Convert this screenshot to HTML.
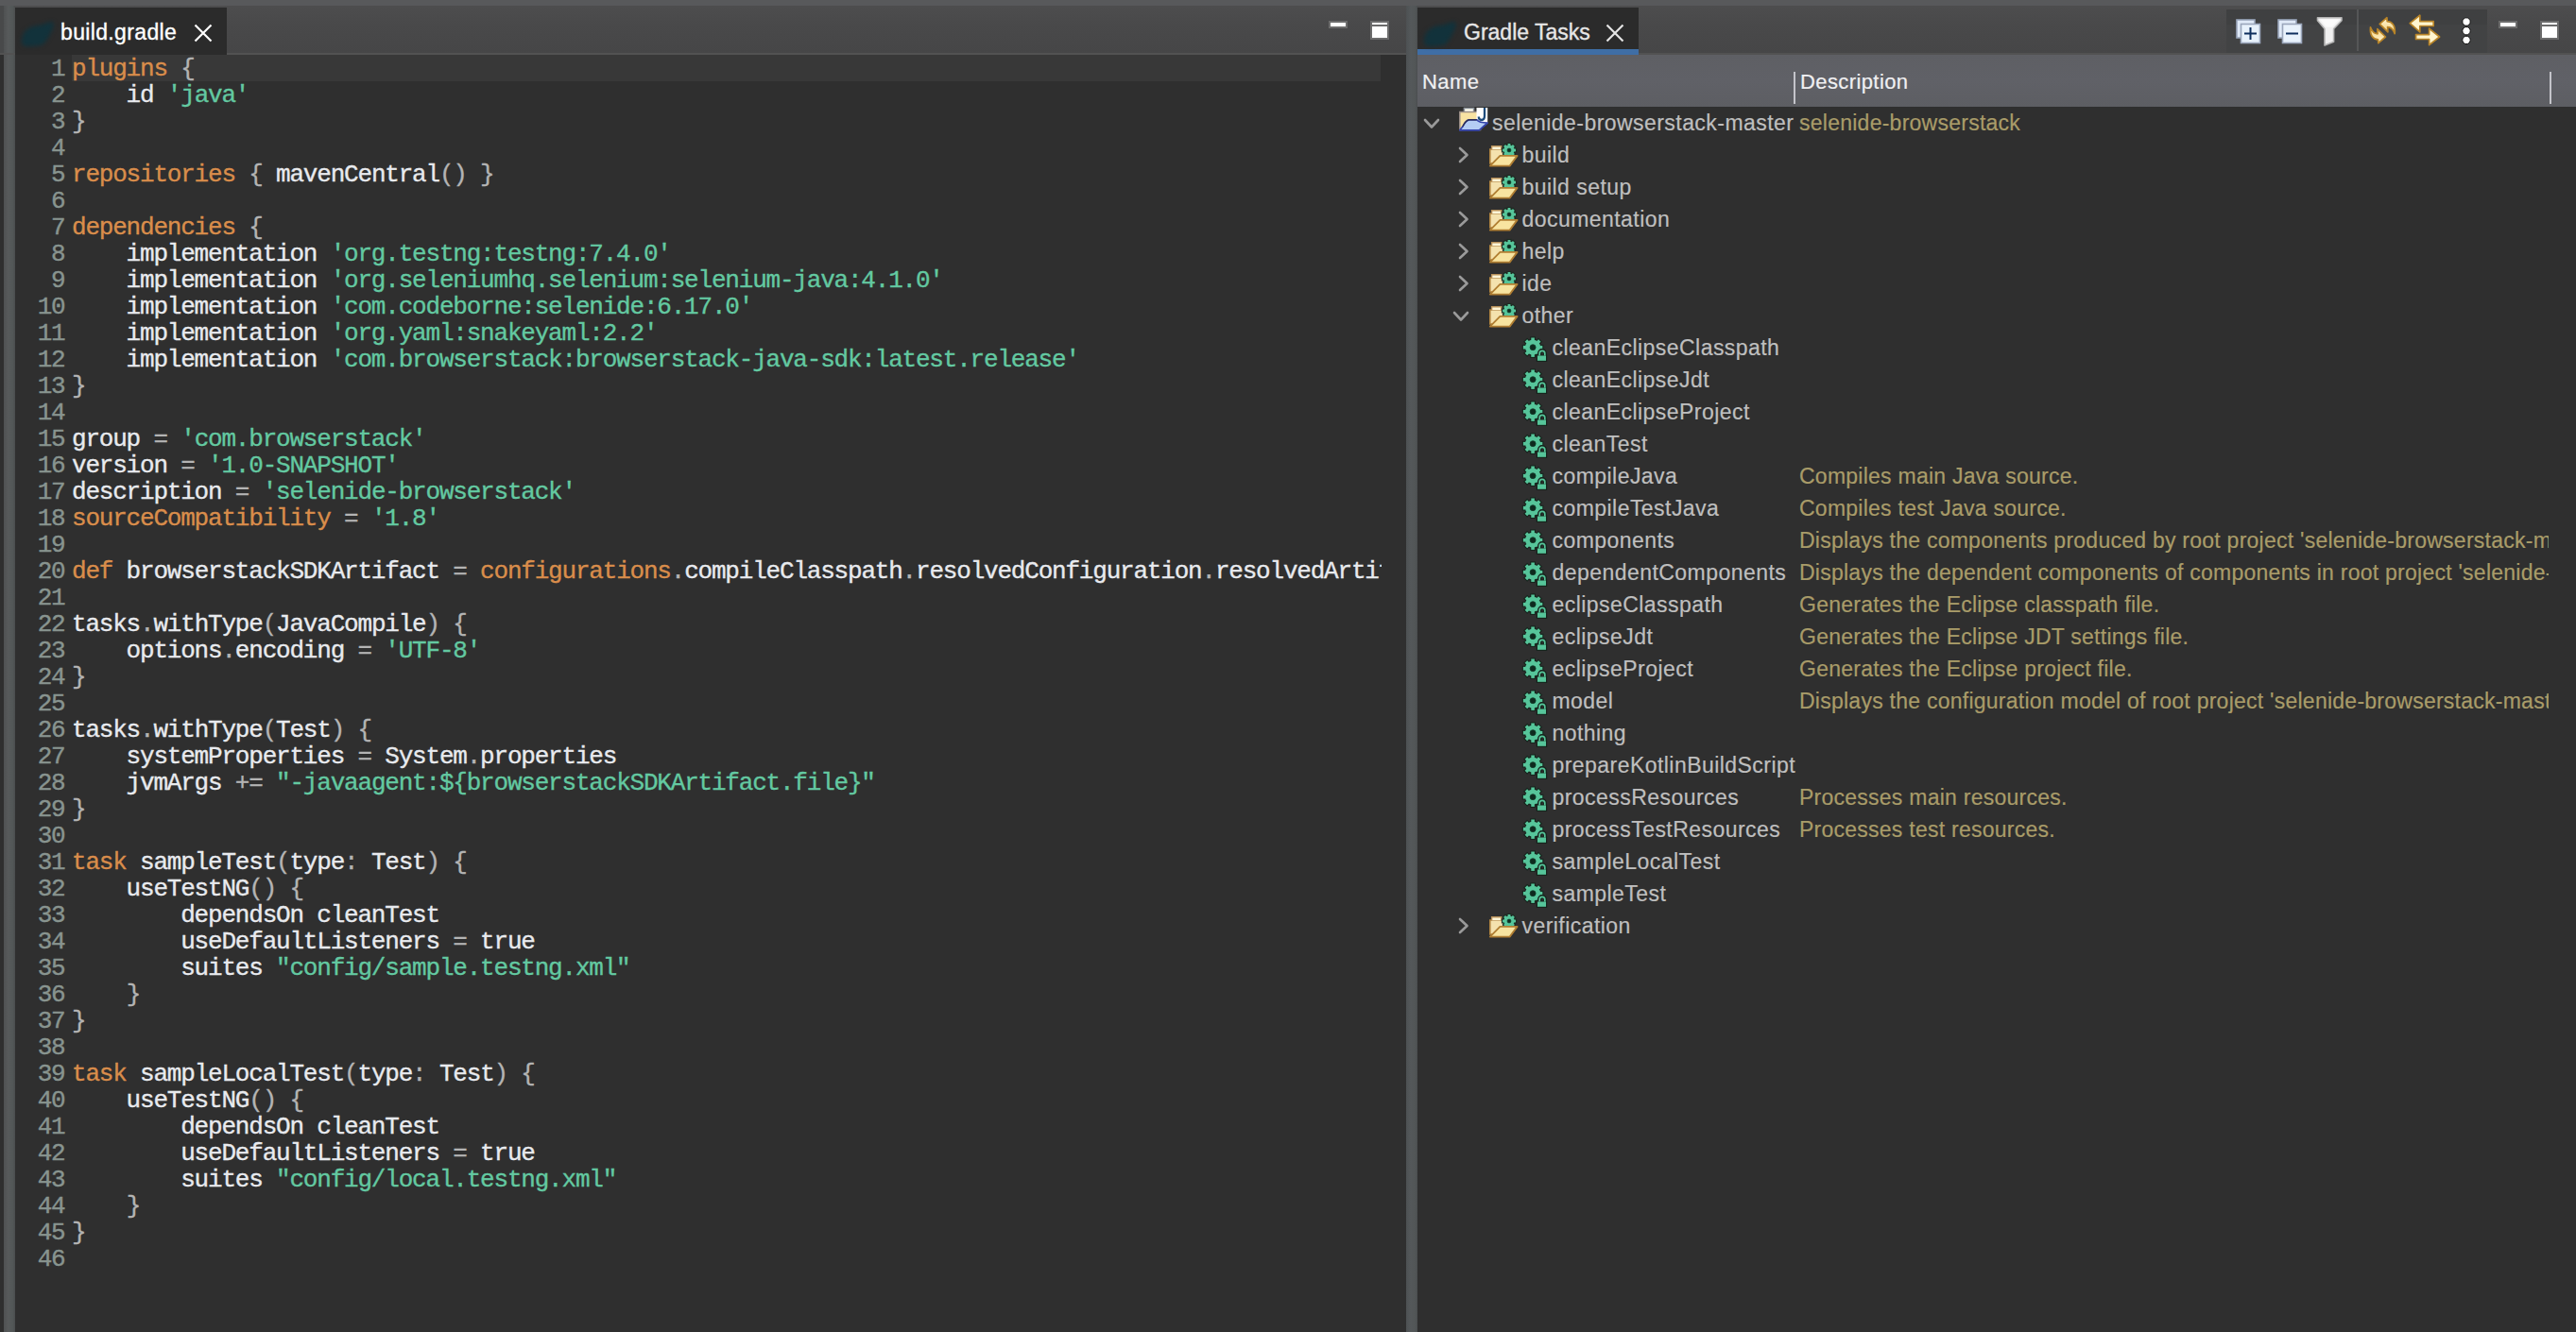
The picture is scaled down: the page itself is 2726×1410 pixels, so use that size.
<!DOCTYPE html>
<html><head><meta charset="utf-8">
<style>
html,body{margin:0;padding:0;}
body{width:2726px;height:1410px;overflow:hidden;position:relative;background:#2f2f2f;font-family:"Liberation Sans",sans-serif;}
.abs{position:absolute;}
#topstrip{position:absolute;left:0;top:0;width:2726px;height:6px;background:#58595b;}
#lsash0{position:absolute;left:0;top:6px;width:4px;height:50px;background:#48494a;}
#lsash0b{position:absolute;left:0;top:56px;width:4px;height:2px;background:#535353;}
#lsash{position:absolute;left:4px;top:6px;width:12px;height:1404px;background:linear-gradient(90deg,#4f5152,#575a5b 40%,#525757 80%,#4a4c4d);}
#msash{position:absolute;left:1488px;top:6px;width:12px;height:1404px;background:linear-gradient(90deg,#4d5153,#54585a 40%,#525657 80%,#4b4e50);}
.tabbar{position:absolute;top:6px;height:50px;background:linear-gradient(180deg,#4d4d4e,#49494a 40%,#464647);}
.tabline{position:absolute;top:56px;height:2px;background:#525252;}
.tab{position:absolute;top:8px;background:#2b2b2b;}
.tabtxt{position:absolute;-webkit-text-stroke:0.35px currentColor;font-size:23px;line-height:26px;white-space:nowrap;}
.elephant{position:absolute;filter:blur(2px);}
.editor{position:absolute;left:16px;top:58px;width:1472px;height:1352px;background:#2f2f2f;overflow:hidden;}
#curline{position:absolute;left:60px;top:0px;width:1385px;height:28px;background:#383838;}
#nums{position:absolute;left:-1.5px;top:1px;width:54px;font-family:"Liberation Mono",monospace;font-size:26px;line-height:28px;letter-spacing:-1.2px;text-align:right;color:#88948f;-webkit-text-stroke:0.4px currentColor;}
#code{position:absolute;left:60px;top:1px;width:1386px;overflow:hidden;font-family:"Liberation Mono",monospace;font-size:26px;line-height:28px;letter-spacing:-1.2px;color:#e8eaee;white-space:pre;-webkit-text-stroke:0.35px currentColor;}
.cl,.ln{height:28px;}
.k{color:#d98d4b;}
.s{color:#63c9a1;}
.p{color:#b4b4b4;}
.gpanel{position:absolute;left:1500px;top:58px;width:1226px;height:1352px;background:#2f2f2f;overflow:hidden;}
#hdr{position:absolute;left:1500px;top:58px;width:1226px;height:55px;background:linear-gradient(180deg,#5e5f64,#606167 50%,#5d5e63);}
.htxt{position:absolute;-webkit-text-stroke:0.2px currentColor;top:73.5px;letter-spacing:0.4px;font-size:22px;line-height:26px;color:#f0f0f2;white-space:nowrap;}
.hsep{position:absolute;top:76px;width:2px;height:34px;background:#c4c4ca;}
.chev{position:absolute;}
.ic{position:absolute;overflow:visible;}
.tn{position:absolute;-webkit-text-stroke:0.2px currentColor;font-size:23px;line-height:34px;letter-spacing:0.45px;color:#bfbfbf;white-space:nowrap;}
.td{position:absolute;left:1904px;-webkit-text-stroke:0.2px currentColor;width:793px;overflow:hidden;font-size:23px;line-height:34px;letter-spacing:0.25px;color:#a99c69;white-space:nowrap;}
.btnmin{position:absolute;width:16px;height:4px;border:2px solid #6c6c6c;background:#fff;}
.btnmax{position:absolute;width:16px;height:16px;border:2px solid #6c6c6c;background:#fff;}
.btnmax:before{content:"";position:absolute;left:0;top:2px;width:16px;height:2px;background:#6c6c6c;}
</style></head>
<body>
<div id="topstrip"></div>
<div id="lsash0"></div><div id="lsash0b"></div>
<div id="lsash"></div>
<div id="msash"></div>

<!-- editor tab bar -->
<div class="tabbar" style="left:16px;width:1472px;"></div>
<div class="tabline" style="left:0px;width:1488px;"></div>
<div class="tab" style="left:16px;width:224px;height:50px;"></div>
<svg class="elephant" style="left:16px;top:14px" width="48" height="40" viewBox="0 0 48 40"><path d="M7 32 C6 22 12 14 24 13 C31 12 35 9 39 9 C42 10 41 16 37 22 C34 28 31 33 27 34 C22 35 14 35 10 35Z" fill="#12323b"/></svg>
<div class="tabtxt" style="left:64px;top:21px;letter-spacing:0.35px;color:#ffffff;">build.gradle</div>
<svg class="abs" style="left:205px;top:25px" width="20" height="20" viewBox="0 0 20 20"><path d="M1.5 1.5 L18.5 18.5 M18.5 1.5 L1.5 18.5" stroke="#ffffff" stroke-width="2.2"/></svg>
<div class="btnmin" style="left:1406px;top:22px;"></div>
<div class="btnmax" style="left:1450px;top:22px;"></div>

<div class="editor">
<div id="curline"></div>
<div id="nums"><div class="ln">1</div><div class="ln">2</div><div class="ln">3</div><div class="ln">4</div><div class="ln">5</div><div class="ln">6</div><div class="ln">7</div><div class="ln">8</div><div class="ln">9</div><div class="ln">10</div><div class="ln">11</div><div class="ln">12</div><div class="ln">13</div><div class="ln">14</div><div class="ln">15</div><div class="ln">16</div><div class="ln">17</div><div class="ln">18</div><div class="ln">19</div><div class="ln">20</div><div class="ln">21</div><div class="ln">22</div><div class="ln">23</div><div class="ln">24</div><div class="ln">25</div><div class="ln">26</div><div class="ln">27</div><div class="ln">28</div><div class="ln">29</div><div class="ln">30</div><div class="ln">31</div><div class="ln">32</div><div class="ln">33</div><div class="ln">34</div><div class="ln">35</div><div class="ln">36</div><div class="ln">37</div><div class="ln">38</div><div class="ln">39</div><div class="ln">40</div><div class="ln">41</div><div class="ln">42</div><div class="ln">43</div><div class="ln">44</div><div class="ln">45</div><div class="ln">46</div></div>
<div id="code"><div class="cl"><span class="k">plugins</span> <span class="p">{</span></div><div class="cl">    id <span class="s">&#x27;java&#x27;</span></div><div class="cl"><span class="p">}</span></div><div class="cl">&nbsp;</div><div class="cl"><span class="k">repositories</span> <span class="p">{</span> mavenCentral<span class="p">(</span><span class="p">)</span> <span class="p">}</span></div><div class="cl">&nbsp;</div><div class="cl"><span class="k">dependencies</span> <span class="p">{</span></div><div class="cl">    implementation <span class="s">&#x27;org.testng:testng:7.4.0&#x27;</span></div><div class="cl">    implementation <span class="s">&#x27;org.seleniumhq.selenium:selenium-java:4.1.0&#x27;</span></div><div class="cl">    implementation <span class="s">&#x27;com.codeborne:selenide:6.17.0&#x27;</span></div><div class="cl">    implementation <span class="s">&#x27;org.yaml:snakeyaml:2.2&#x27;</span></div><div class="cl">    implementation <span class="s">&#x27;com.browserstack:browserstack-java-sdk:latest.release&#x27;</span></div><div class="cl"><span class="p">}</span></div><div class="cl">&nbsp;</div><div class="cl">group <span class="p">=</span> <span class="s">&#x27;com.browserstack&#x27;</span></div><div class="cl">version <span class="p">=</span> <span class="s">&#x27;1.0-SNAPSHOT&#x27;</span></div><div class="cl">description <span class="p">=</span> <span class="s">&#x27;selenide-browserstack&#x27;</span></div><div class="cl"><span class="k">sourceCompatibility</span> <span class="p">=</span> <span class="s">&#x27;1.8&#x27;</span></div><div class="cl">&nbsp;</div><div class="cl"><span class="k">def</span> browserstackSDKArtifact <span class="p">=</span> <span class="k">configurations</span><span class="p">.</span>compileClasspath<span class="p">.</span>resolvedConfiguration<span class="p">.</span>resolvedArtifacts</div><div class="cl">&nbsp;</div><div class="cl">tasks<span class="p">.</span>withType<span class="p">(</span>JavaCompile<span class="p">)</span> <span class="p">{</span></div><div class="cl">    options<span class="p">.</span>encoding <span class="p">=</span> <span class="s">&#x27;UTF-8&#x27;</span></div><div class="cl"><span class="p">}</span></div><div class="cl">&nbsp;</div><div class="cl">tasks<span class="p">.</span>withType<span class="p">(</span>Test<span class="p">)</span> <span class="p">{</span></div><div class="cl">    systemProperties <span class="p">=</span> System<span class="p">.</span>properties</div><div class="cl">    jvmArgs <span class="p">+=</span> <span class="s">&quot;-javaagent:${browserstackSDKArtifact.file}&quot;</span></div><div class="cl"><span class="p">}</span></div><div class="cl">&nbsp;</div><div class="cl"><span class="k">task</span> sampleTest<span class="p">(</span>type<span class="p">:</span> Test<span class="p">)</span> <span class="p">{</span></div><div class="cl">    useTestNG<span class="p">(</span><span class="p">)</span> <span class="p">{</span></div><div class="cl">        dependsOn cleanTest</div><div class="cl">        useDefaultListeners <span class="p">=</span> true</div><div class="cl">        suites <span class="s">&quot;config/sample.testng.xml&quot;</span></div><div class="cl">    <span class="p">}</span></div><div class="cl"><span class="p">}</span></div><div class="cl">&nbsp;</div><div class="cl"><span class="k">task</span> sampleLocalTest<span class="p">(</span>type<span class="p">:</span> Test<span class="p">)</span> <span class="p">{</span></div><div class="cl">    useTestNG<span class="p">(</span><span class="p">)</span> <span class="p">{</span></div><div class="cl">        dependsOn cleanTest</div><div class="cl">        useDefaultListeners <span class="p">=</span> true</div><div class="cl">        suites <span class="s">&quot;config/local.testng.xml&quot;</span></div><div class="cl">    <span class="p">}</span></div><div class="cl"><span class="p">}</span></div><div class="cl">&nbsp;</div></div>
</div>

<!-- gradle tab bar -->
<div class="tabbar" style="left:1500px;width:1226px;"></div>
<div class="tabline" style="left:1500px;width:1226px;"></div>
<div class="abs" style="left:2356px;top:10px;width:276px;height:46px;background:linear-gradient(180deg,#3f4041,#3f4041 35%,#424344 36%,#424344);"></div>
<div class="abs" style="left:2494px;top:10px;width:2px;height:44px;background:#555657;"></div>
<div class="tab" style="left:1500px;width:234px;height:44px;"></div>
<div class="abs" style="left:1500px;top:52px;width:234px;height:6px;background:#3f6ea6;"></div>
<svg class="elephant" style="left:1500px;top:14px" width="48" height="40" viewBox="0 0 48 40"><path d="M7 32 C6 22 12 14 24 13 C31 12 35 9 39 9 C42 10 41 16 37 22 C34 28 31 33 27 34 C22 35 14 35 10 35Z" fill="#12323b"/></svg>
<div class="tabtxt" style="left:1549px;top:21px;letter-spacing:0px;color:#e6e6e6;">Gradle Tasks</div>
<svg class="abs" style="left:1699px;top:25px" width="20" height="20" viewBox="0 0 20 20"><path d="M1.5 1.5 L18.5 18.5 M18.5 1.5 L1.5 18.5" stroke="#e6e6e6" stroke-width="2.2"/></svg>

<!-- toolbar icons -->
<svg class="abs" style="left:2366px;top:20px" width="27" height="27" viewBox="0 0 27 27">
<rect x="1" y="1" width="19" height="19" fill="#dfe9f7" stroke="#9aa6bb" stroke-width="1.6"/>
<rect x="5.5" y="5.5" width="20" height="20" fill="#e8f2fc" stroke="#9aa6bb" stroke-width="1.6"/>
<path d="M15.5 9 V22 M9 15.5 H22" stroke="#0e2f5e" stroke-width="2"/></svg>
<svg class="abs" style="left:2410px;top:20px" width="27" height="27" viewBox="0 0 27 27">
<rect x="1" y="1" width="19" height="19" fill="#dfe9f7" stroke="#9aa6bb" stroke-width="1.6"/>
<rect x="5.5" y="5.5" width="20" height="20" fill="#e8f2fc" stroke="#9aa6bb" stroke-width="1.6"/>
<path d="M9 15.5 H22" stroke="#0e2f5e" stroke-width="2"/></svg>
<svg class="abs" style="left:2451px;top:17px" width="29" height="33" viewBox="0 0 29 33">
<path d="M1.5 1.8 H27 V4.8 L18.6 13.5 V27.2 L9 31 V13.5 L1.5 4.8Z" fill="#f0f0f0" stroke="#b4b4b4" stroke-width="1.6" stroke-linejoin="round"/>
<path d="M4 3.6 H24.5 L17 11.5 H10.5Z" fill="#fbfbfb"/></svg>
<svg class="abs" style="left:2507px;top:17px" width="30" height="32" viewBox="0 0 30 32">
<defs><linearGradient id="gy" x1="0" y1="0" x2="0" y2="1"><stop offset="0" stop-color="#fff6d6"/><stop offset="1" stop-color="#f3cf78"/></linearGradient></defs>
<path id="rf" d="M11.2 8.4 L18.9 1.7 L19.2 5.6 C24.5 5.8 28 10 27.2 18.6 C25.8 14.6 23.2 11.8 19.6 11.6 L19.9 16.8 Z" fill="url(#gy)" stroke="#b88428" stroke-width="1.7" stroke-linejoin="round"/>
<use href="#rf" transform="rotate(180 14.35 15.2)"/></svg>
<svg class="abs" style="left:2549px;top:15px" width="34" height="34" viewBox="0 0 34 34">
<path d="M1.2 9.7 L11.8 1.2 V7.6 H26.2 V12.5 H11.8 V18.9 Z" fill="#fff5cf" stroke="#b88428" stroke-width="1.7" stroke-linejoin="round"/>
<path d="M32.6 24 L21.6 15.1 V21.6 H7.6 V26.5 H21.6 V32.6 Z" fill="#fff5cf" stroke="#b88428" stroke-width="1.7" stroke-linejoin="round"/></svg>
<svg class="abs" style="left:2603px;top:17px" width="14" height="31" viewBox="0 0 14 31">
<circle cx="7" cy="6" r="4.2" fill="#fff" stroke="#111" stroke-width="1"/>
<circle cx="7" cy="15.7" r="4.2" fill="#fff" stroke="#111" stroke-width="1"/>
<circle cx="7" cy="25.4" r="4.2" fill="#fff" stroke="#111" stroke-width="1"/></svg>
<div class="btnmin" style="left:2644px;top:22px;"></div>
<div class="btnmax" style="left:2688px;top:22px;"></div>

<div class="gpanel"></div>
<div id="hdr"></div>
<div class="htxt" style="left:1505px;">Name</div>
<div class="hsep" style="left:1898px;"></div>
<div class="htxt" style="left:1905px;">Description</div>
<div class="hsep" style="left:2698px;"></div>

<svg class="chev" width="18" height="12" viewBox="0 0 18 12" style="left:1506.0px;top:125.0px"><path d="M2 2 L9 9.5 L16 2" fill="none" stroke="#9a9a9a" stroke-width="2.6" stroke-linecap="round" stroke-linejoin="round"/></svg>
<svg class="ic" width="34" height="27" viewBox="0 0 34 27" style="left:1543px;top:113px"><path d="M6.4 5.6 V1.6 H16.6 V5.6" fill="#fffef0" stroke="#8a9099" stroke-width="1.5"/><path d="M1.8 5.6 H23.5 V24.5 H1.8Z" fill="#f8e3a2" stroke="#9a8f88" stroke-width="1.5"/><path d="M19.5 1 H31.2 V17.5 L24 23 H19.5Z" fill="#ffffff"/><path d="M28 1 V9.8 C28 12.6 26.6 14 24.8 14 C23 14 21.8 12.6 21.8 10.6" fill="none" stroke="#1e4c7c" stroke-width="2.3"/><path d="M1.8 24.8 L4.8 21 C7.5 15.5 9.5 13.8 12 13.8 H19.8 C21 15.5 24 17 31.2 17 L22.3 24.8Z" fill="#b4cdf4" stroke="#3444ac" stroke-width="1.7" stroke-linejoin="round"/><path d="M4.8 21 C7.5 15.5 9.5 13.8 12 13.8 H19.8" fill="none" stroke="#2d2f55" stroke-width="1.4"/></svg>
<div class="tn" style="left:1579.0px;top:113px">selenide-browserstack-master</div>
<div class="td" style="top:113px">selenide-browserstack</div>
<svg class="chev" width="12" height="18" viewBox="0 0 12 18" style="left:1543.0px;top:154.6px"><path d="M2 2 L9.5 9 L2 16" fill="none" stroke="#9a9a9a" stroke-width="2.6" stroke-linecap="round" stroke-linejoin="round"/></svg>
<svg class="ic" width="32" height="26" viewBox="0 0 32 26" style="left:1575px;top:151px"><path d="M1.8 7 H16.5 V22 H1.8Z" fill="#f4e2ae" stroke="#b08440" stroke-width="1.6"/><path d="M3.6 7.2 V3.8 H13.8 V7.2" fill="#fff6d8" stroke="#b8915a" stroke-width="1.4"/><g stroke="#1d2a22" stroke-width="2.2"><rect x="20.60" y="1.00" width="2.80" height="7.00" transform="rotate(0 22.00 8.00)" fill="#1d2a22"/><rect x="20.60" y="1.00" width="2.80" height="7.00" transform="rotate(45 22.00 8.00)" fill="#1d2a22"/><rect x="20.60" y="1.00" width="2.80" height="7.00" transform="rotate(90 22.00 8.00)" fill="#1d2a22"/><rect x="20.60" y="1.00" width="2.80" height="7.00" transform="rotate(135 22.00 8.00)" fill="#1d2a22"/><rect x="20.60" y="1.00" width="2.80" height="7.00" transform="rotate(180 22.00 8.00)" fill="#1d2a22"/><rect x="20.60" y="1.00" width="2.80" height="7.00" transform="rotate(225 22.00 8.00)" fill="#1d2a22"/><rect x="20.60" y="1.00" width="2.80" height="7.00" transform="rotate(270 22.00 8.00)" fill="#1d2a22"/><rect x="20.60" y="1.00" width="2.80" height="7.00" transform="rotate(315 22.00 8.00)" fill="#1d2a22"/><circle cx="22.00" cy="8.00" r="5.60" fill="#1d2a22"/></g><rect x="20.60" y="1.00" width="2.80" height="7.00" transform="rotate(0 22.00 8.00)" fill="#56c59a"/><rect x="20.60" y="1.00" width="2.80" height="7.00" transform="rotate(45 22.00 8.00)" fill="#56c59a"/><rect x="20.60" y="1.00" width="2.80" height="7.00" transform="rotate(90 22.00 8.00)" fill="#56c59a"/><rect x="20.60" y="1.00" width="2.80" height="7.00" transform="rotate(135 22.00 8.00)" fill="#56c59a"/><rect x="20.60" y="1.00" width="2.80" height="7.00" transform="rotate(180 22.00 8.00)" fill="#56c59a"/><rect x="20.60" y="1.00" width="2.80" height="7.00" transform="rotate(225 22.00 8.00)" fill="#56c59a"/><rect x="20.60" y="1.00" width="2.80" height="7.00" transform="rotate(270 22.00 8.00)" fill="#56c59a"/><rect x="20.60" y="1.00" width="2.80" height="7.00" transform="rotate(315 22.00 8.00)" fill="#56c59a"/><circle cx="22.00" cy="8.00" r="5.60" fill="#56c59a"/><circle cx="22.00" cy="8.00" r="1.90" fill="#0e2a1e" stroke="#123a28" stroke-width="0.8"/><path d="M1.8 24.6 L12.4 13.9 H30.6 L22.6 24.6Z" fill="#f8e4a0" stroke="#b07e32" stroke-width="1.8" stroke-linejoin="round"/></svg>
<div class="tn" style="left:1610.5px;top:147px">build</div>
<svg class="chev" width="12" height="18" viewBox="0 0 12 18" style="left:1543.0px;top:188.6px"><path d="M2 2 L9.5 9 L2 16" fill="none" stroke="#9a9a9a" stroke-width="2.6" stroke-linecap="round" stroke-linejoin="round"/></svg>
<svg class="ic" width="32" height="26" viewBox="0 0 32 26" style="left:1575px;top:185px"><path d="M1.8 7 H16.5 V22 H1.8Z" fill="#f4e2ae" stroke="#b08440" stroke-width="1.6"/><path d="M3.6 7.2 V3.8 H13.8 V7.2" fill="#fff6d8" stroke="#b8915a" stroke-width="1.4"/><g stroke="#1d2a22" stroke-width="2.2"><rect x="20.60" y="1.00" width="2.80" height="7.00" transform="rotate(0 22.00 8.00)" fill="#1d2a22"/><rect x="20.60" y="1.00" width="2.80" height="7.00" transform="rotate(45 22.00 8.00)" fill="#1d2a22"/><rect x="20.60" y="1.00" width="2.80" height="7.00" transform="rotate(90 22.00 8.00)" fill="#1d2a22"/><rect x="20.60" y="1.00" width="2.80" height="7.00" transform="rotate(135 22.00 8.00)" fill="#1d2a22"/><rect x="20.60" y="1.00" width="2.80" height="7.00" transform="rotate(180 22.00 8.00)" fill="#1d2a22"/><rect x="20.60" y="1.00" width="2.80" height="7.00" transform="rotate(225 22.00 8.00)" fill="#1d2a22"/><rect x="20.60" y="1.00" width="2.80" height="7.00" transform="rotate(270 22.00 8.00)" fill="#1d2a22"/><rect x="20.60" y="1.00" width="2.80" height="7.00" transform="rotate(315 22.00 8.00)" fill="#1d2a22"/><circle cx="22.00" cy="8.00" r="5.60" fill="#1d2a22"/></g><rect x="20.60" y="1.00" width="2.80" height="7.00" transform="rotate(0 22.00 8.00)" fill="#56c59a"/><rect x="20.60" y="1.00" width="2.80" height="7.00" transform="rotate(45 22.00 8.00)" fill="#56c59a"/><rect x="20.60" y="1.00" width="2.80" height="7.00" transform="rotate(90 22.00 8.00)" fill="#56c59a"/><rect x="20.60" y="1.00" width="2.80" height="7.00" transform="rotate(135 22.00 8.00)" fill="#56c59a"/><rect x="20.60" y="1.00" width="2.80" height="7.00" transform="rotate(180 22.00 8.00)" fill="#56c59a"/><rect x="20.60" y="1.00" width="2.80" height="7.00" transform="rotate(225 22.00 8.00)" fill="#56c59a"/><rect x="20.60" y="1.00" width="2.80" height="7.00" transform="rotate(270 22.00 8.00)" fill="#56c59a"/><rect x="20.60" y="1.00" width="2.80" height="7.00" transform="rotate(315 22.00 8.00)" fill="#56c59a"/><circle cx="22.00" cy="8.00" r="5.60" fill="#56c59a"/><circle cx="22.00" cy="8.00" r="1.90" fill="#0e2a1e" stroke="#123a28" stroke-width="0.8"/><path d="M1.8 24.6 L12.4 13.9 H30.6 L22.6 24.6Z" fill="#f8e4a0" stroke="#b07e32" stroke-width="1.8" stroke-linejoin="round"/></svg>
<div class="tn" style="left:1610.5px;top:181px">build setup</div>
<svg class="chev" width="12" height="18" viewBox="0 0 12 18" style="left:1543.0px;top:222.6px"><path d="M2 2 L9.5 9 L2 16" fill="none" stroke="#9a9a9a" stroke-width="2.6" stroke-linecap="round" stroke-linejoin="round"/></svg>
<svg class="ic" width="32" height="26" viewBox="0 0 32 26" style="left:1575px;top:219px"><path d="M1.8 7 H16.5 V22 H1.8Z" fill="#f4e2ae" stroke="#b08440" stroke-width="1.6"/><path d="M3.6 7.2 V3.8 H13.8 V7.2" fill="#fff6d8" stroke="#b8915a" stroke-width="1.4"/><g stroke="#1d2a22" stroke-width="2.2"><rect x="20.60" y="1.00" width="2.80" height="7.00" transform="rotate(0 22.00 8.00)" fill="#1d2a22"/><rect x="20.60" y="1.00" width="2.80" height="7.00" transform="rotate(45 22.00 8.00)" fill="#1d2a22"/><rect x="20.60" y="1.00" width="2.80" height="7.00" transform="rotate(90 22.00 8.00)" fill="#1d2a22"/><rect x="20.60" y="1.00" width="2.80" height="7.00" transform="rotate(135 22.00 8.00)" fill="#1d2a22"/><rect x="20.60" y="1.00" width="2.80" height="7.00" transform="rotate(180 22.00 8.00)" fill="#1d2a22"/><rect x="20.60" y="1.00" width="2.80" height="7.00" transform="rotate(225 22.00 8.00)" fill="#1d2a22"/><rect x="20.60" y="1.00" width="2.80" height="7.00" transform="rotate(270 22.00 8.00)" fill="#1d2a22"/><rect x="20.60" y="1.00" width="2.80" height="7.00" transform="rotate(315 22.00 8.00)" fill="#1d2a22"/><circle cx="22.00" cy="8.00" r="5.60" fill="#1d2a22"/></g><rect x="20.60" y="1.00" width="2.80" height="7.00" transform="rotate(0 22.00 8.00)" fill="#56c59a"/><rect x="20.60" y="1.00" width="2.80" height="7.00" transform="rotate(45 22.00 8.00)" fill="#56c59a"/><rect x="20.60" y="1.00" width="2.80" height="7.00" transform="rotate(90 22.00 8.00)" fill="#56c59a"/><rect x="20.60" y="1.00" width="2.80" height="7.00" transform="rotate(135 22.00 8.00)" fill="#56c59a"/><rect x="20.60" y="1.00" width="2.80" height="7.00" transform="rotate(180 22.00 8.00)" fill="#56c59a"/><rect x="20.60" y="1.00" width="2.80" height="7.00" transform="rotate(225 22.00 8.00)" fill="#56c59a"/><rect x="20.60" y="1.00" width="2.80" height="7.00" transform="rotate(270 22.00 8.00)" fill="#56c59a"/><rect x="20.60" y="1.00" width="2.80" height="7.00" transform="rotate(315 22.00 8.00)" fill="#56c59a"/><circle cx="22.00" cy="8.00" r="5.60" fill="#56c59a"/><circle cx="22.00" cy="8.00" r="1.90" fill="#0e2a1e" stroke="#123a28" stroke-width="0.8"/><path d="M1.8 24.6 L12.4 13.9 H30.6 L22.6 24.6Z" fill="#f8e4a0" stroke="#b07e32" stroke-width="1.8" stroke-linejoin="round"/></svg>
<div class="tn" style="left:1610.5px;top:215px">documentation</div>
<svg class="chev" width="12" height="18" viewBox="0 0 12 18" style="left:1543.0px;top:256.6px"><path d="M2 2 L9.5 9 L2 16" fill="none" stroke="#9a9a9a" stroke-width="2.6" stroke-linecap="round" stroke-linejoin="round"/></svg>
<svg class="ic" width="32" height="26" viewBox="0 0 32 26" style="left:1575px;top:253px"><path d="M1.8 7 H16.5 V22 H1.8Z" fill="#f4e2ae" stroke="#b08440" stroke-width="1.6"/><path d="M3.6 7.2 V3.8 H13.8 V7.2" fill="#fff6d8" stroke="#b8915a" stroke-width="1.4"/><g stroke="#1d2a22" stroke-width="2.2"><rect x="20.60" y="1.00" width="2.80" height="7.00" transform="rotate(0 22.00 8.00)" fill="#1d2a22"/><rect x="20.60" y="1.00" width="2.80" height="7.00" transform="rotate(45 22.00 8.00)" fill="#1d2a22"/><rect x="20.60" y="1.00" width="2.80" height="7.00" transform="rotate(90 22.00 8.00)" fill="#1d2a22"/><rect x="20.60" y="1.00" width="2.80" height="7.00" transform="rotate(135 22.00 8.00)" fill="#1d2a22"/><rect x="20.60" y="1.00" width="2.80" height="7.00" transform="rotate(180 22.00 8.00)" fill="#1d2a22"/><rect x="20.60" y="1.00" width="2.80" height="7.00" transform="rotate(225 22.00 8.00)" fill="#1d2a22"/><rect x="20.60" y="1.00" width="2.80" height="7.00" transform="rotate(270 22.00 8.00)" fill="#1d2a22"/><rect x="20.60" y="1.00" width="2.80" height="7.00" transform="rotate(315 22.00 8.00)" fill="#1d2a22"/><circle cx="22.00" cy="8.00" r="5.60" fill="#1d2a22"/></g><rect x="20.60" y="1.00" width="2.80" height="7.00" transform="rotate(0 22.00 8.00)" fill="#56c59a"/><rect x="20.60" y="1.00" width="2.80" height="7.00" transform="rotate(45 22.00 8.00)" fill="#56c59a"/><rect x="20.60" y="1.00" width="2.80" height="7.00" transform="rotate(90 22.00 8.00)" fill="#56c59a"/><rect x="20.60" y="1.00" width="2.80" height="7.00" transform="rotate(135 22.00 8.00)" fill="#56c59a"/><rect x="20.60" y="1.00" width="2.80" height="7.00" transform="rotate(180 22.00 8.00)" fill="#56c59a"/><rect x="20.60" y="1.00" width="2.80" height="7.00" transform="rotate(225 22.00 8.00)" fill="#56c59a"/><rect x="20.60" y="1.00" width="2.80" height="7.00" transform="rotate(270 22.00 8.00)" fill="#56c59a"/><rect x="20.60" y="1.00" width="2.80" height="7.00" transform="rotate(315 22.00 8.00)" fill="#56c59a"/><circle cx="22.00" cy="8.00" r="5.60" fill="#56c59a"/><circle cx="22.00" cy="8.00" r="1.90" fill="#0e2a1e" stroke="#123a28" stroke-width="0.8"/><path d="M1.8 24.6 L12.4 13.9 H30.6 L22.6 24.6Z" fill="#f8e4a0" stroke="#b07e32" stroke-width="1.8" stroke-linejoin="round"/></svg>
<div class="tn" style="left:1610.5px;top:249px">help</div>
<svg class="chev" width="12" height="18" viewBox="0 0 12 18" style="left:1543.0px;top:290.6px"><path d="M2 2 L9.5 9 L2 16" fill="none" stroke="#9a9a9a" stroke-width="2.6" stroke-linecap="round" stroke-linejoin="round"/></svg>
<svg class="ic" width="32" height="26" viewBox="0 0 32 26" style="left:1575px;top:287px"><path d="M1.8 7 H16.5 V22 H1.8Z" fill="#f4e2ae" stroke="#b08440" stroke-width="1.6"/><path d="M3.6 7.2 V3.8 H13.8 V7.2" fill="#fff6d8" stroke="#b8915a" stroke-width="1.4"/><g stroke="#1d2a22" stroke-width="2.2"><rect x="20.60" y="1.00" width="2.80" height="7.00" transform="rotate(0 22.00 8.00)" fill="#1d2a22"/><rect x="20.60" y="1.00" width="2.80" height="7.00" transform="rotate(45 22.00 8.00)" fill="#1d2a22"/><rect x="20.60" y="1.00" width="2.80" height="7.00" transform="rotate(90 22.00 8.00)" fill="#1d2a22"/><rect x="20.60" y="1.00" width="2.80" height="7.00" transform="rotate(135 22.00 8.00)" fill="#1d2a22"/><rect x="20.60" y="1.00" width="2.80" height="7.00" transform="rotate(180 22.00 8.00)" fill="#1d2a22"/><rect x="20.60" y="1.00" width="2.80" height="7.00" transform="rotate(225 22.00 8.00)" fill="#1d2a22"/><rect x="20.60" y="1.00" width="2.80" height="7.00" transform="rotate(270 22.00 8.00)" fill="#1d2a22"/><rect x="20.60" y="1.00" width="2.80" height="7.00" transform="rotate(315 22.00 8.00)" fill="#1d2a22"/><circle cx="22.00" cy="8.00" r="5.60" fill="#1d2a22"/></g><rect x="20.60" y="1.00" width="2.80" height="7.00" transform="rotate(0 22.00 8.00)" fill="#56c59a"/><rect x="20.60" y="1.00" width="2.80" height="7.00" transform="rotate(45 22.00 8.00)" fill="#56c59a"/><rect x="20.60" y="1.00" width="2.80" height="7.00" transform="rotate(90 22.00 8.00)" fill="#56c59a"/><rect x="20.60" y="1.00" width="2.80" height="7.00" transform="rotate(135 22.00 8.00)" fill="#56c59a"/><rect x="20.60" y="1.00" width="2.80" height="7.00" transform="rotate(180 22.00 8.00)" fill="#56c59a"/><rect x="20.60" y="1.00" width="2.80" height="7.00" transform="rotate(225 22.00 8.00)" fill="#56c59a"/><rect x="20.60" y="1.00" width="2.80" height="7.00" transform="rotate(270 22.00 8.00)" fill="#56c59a"/><rect x="20.60" y="1.00" width="2.80" height="7.00" transform="rotate(315 22.00 8.00)" fill="#56c59a"/><circle cx="22.00" cy="8.00" r="5.60" fill="#56c59a"/><circle cx="22.00" cy="8.00" r="1.90" fill="#0e2a1e" stroke="#123a28" stroke-width="0.8"/><path d="M1.8 24.6 L12.4 13.9 H30.6 L22.6 24.6Z" fill="#f8e4a0" stroke="#b07e32" stroke-width="1.8" stroke-linejoin="round"/></svg>
<div class="tn" style="left:1610.5px;top:283px">ide</div>
<svg class="chev" width="18" height="12" viewBox="0 0 18 12" style="left:1537.0px;top:329.0px"><path d="M2 2 L9 9.5 L16 2" fill="none" stroke="#9a9a9a" stroke-width="2.6" stroke-linecap="round" stroke-linejoin="round"/></svg>
<svg class="ic" width="32" height="26" viewBox="0 0 32 26" style="left:1575px;top:321px"><path d="M1.8 7 H16.5 V22 H1.8Z" fill="#f4e2ae" stroke="#b08440" stroke-width="1.6"/><path d="M3.6 7.2 V3.8 H13.8 V7.2" fill="#fff6d8" stroke="#b8915a" stroke-width="1.4"/><g stroke="#1d2a22" stroke-width="2.2"><rect x="20.60" y="1.00" width="2.80" height="7.00" transform="rotate(0 22.00 8.00)" fill="#1d2a22"/><rect x="20.60" y="1.00" width="2.80" height="7.00" transform="rotate(45 22.00 8.00)" fill="#1d2a22"/><rect x="20.60" y="1.00" width="2.80" height="7.00" transform="rotate(90 22.00 8.00)" fill="#1d2a22"/><rect x="20.60" y="1.00" width="2.80" height="7.00" transform="rotate(135 22.00 8.00)" fill="#1d2a22"/><rect x="20.60" y="1.00" width="2.80" height="7.00" transform="rotate(180 22.00 8.00)" fill="#1d2a22"/><rect x="20.60" y="1.00" width="2.80" height="7.00" transform="rotate(225 22.00 8.00)" fill="#1d2a22"/><rect x="20.60" y="1.00" width="2.80" height="7.00" transform="rotate(270 22.00 8.00)" fill="#1d2a22"/><rect x="20.60" y="1.00" width="2.80" height="7.00" transform="rotate(315 22.00 8.00)" fill="#1d2a22"/><circle cx="22.00" cy="8.00" r="5.60" fill="#1d2a22"/></g><rect x="20.60" y="1.00" width="2.80" height="7.00" transform="rotate(0 22.00 8.00)" fill="#56c59a"/><rect x="20.60" y="1.00" width="2.80" height="7.00" transform="rotate(45 22.00 8.00)" fill="#56c59a"/><rect x="20.60" y="1.00" width="2.80" height="7.00" transform="rotate(90 22.00 8.00)" fill="#56c59a"/><rect x="20.60" y="1.00" width="2.80" height="7.00" transform="rotate(135 22.00 8.00)" fill="#56c59a"/><rect x="20.60" y="1.00" width="2.80" height="7.00" transform="rotate(180 22.00 8.00)" fill="#56c59a"/><rect x="20.60" y="1.00" width="2.80" height="7.00" transform="rotate(225 22.00 8.00)" fill="#56c59a"/><rect x="20.60" y="1.00" width="2.80" height="7.00" transform="rotate(270 22.00 8.00)" fill="#56c59a"/><rect x="20.60" y="1.00" width="2.80" height="7.00" transform="rotate(315 22.00 8.00)" fill="#56c59a"/><circle cx="22.00" cy="8.00" r="5.60" fill="#56c59a"/><circle cx="22.00" cy="8.00" r="1.90" fill="#0e2a1e" stroke="#123a28" stroke-width="0.8"/><path d="M1.8 24.6 L12.4 13.9 H30.6 L22.6 24.6Z" fill="#f8e4a0" stroke="#b07e32" stroke-width="1.8" stroke-linejoin="round"/></svg>
<div class="tn" style="left:1610.5px;top:317px">other</div>
<svg class="ic" width="28" height="28" viewBox="0 0 28 28" style="left:1611px;top:356px"><g stroke="#16251d" stroke-width="2.2"><rect x="9.30" y="1.50" width="3.60" height="10.20" transform="rotate(0 11.10 11.70)" fill="#16251d"/><rect x="9.30" y="1.50" width="3.60" height="10.20" transform="rotate(45 11.10 11.70)" fill="#16251d"/><rect x="9.30" y="1.50" width="3.60" height="10.20" transform="rotate(90 11.10 11.70)" fill="#16251d"/><rect x="9.30" y="1.50" width="3.60" height="10.20" transform="rotate(135 11.10 11.70)" fill="#16251d"/><rect x="9.30" y="1.50" width="3.60" height="10.20" transform="rotate(180 11.10 11.70)" fill="#16251d"/><rect x="9.30" y="1.50" width="3.60" height="10.20" transform="rotate(225 11.10 11.70)" fill="#16251d"/><rect x="9.30" y="1.50" width="3.60" height="10.20" transform="rotate(270 11.10 11.70)" fill="#16251d"/><rect x="9.30" y="1.50" width="3.60" height="10.20" transform="rotate(315 11.10 11.70)" fill="#16251d"/><circle cx="11.10" cy="11.70" r="8.00" fill="#16251d"/></g><rect x="9.30" y="1.50" width="3.60" height="10.20" transform="rotate(0 11.10 11.70)" fill="#56c59a"/><rect x="9.30" y="1.50" width="3.60" height="10.20" transform="rotate(45 11.10 11.70)" fill="#56c59a"/><rect x="9.30" y="1.50" width="3.60" height="10.20" transform="rotate(90 11.10 11.70)" fill="#56c59a"/><rect x="9.30" y="1.50" width="3.60" height="10.20" transform="rotate(135 11.10 11.70)" fill="#56c59a"/><rect x="9.30" y="1.50" width="3.60" height="10.20" transform="rotate(180 11.10 11.70)" fill="#56c59a"/><rect x="9.30" y="1.50" width="3.60" height="10.20" transform="rotate(225 11.10 11.70)" fill="#56c59a"/><rect x="9.30" y="1.50" width="3.60" height="10.20" transform="rotate(270 11.10 11.70)" fill="#56c59a"/><rect x="9.30" y="1.50" width="3.60" height="10.20" transform="rotate(315 11.10 11.70)" fill="#56c59a"/><circle cx="11.10" cy="11.70" r="8.00" fill="#56c59a"/><circle cx="11.10" cy="11.70" r="3.00" fill="#0e2a1e" stroke="#123a28" stroke-width="0.8"/><path d="M18 20.5 v-2.5 a3 3 0 0 1 6 0 v2.5" fill="none" stroke="#16251d" stroke-width="4"/><rect x="14.8" y="19.3" width="11.4" height="7.7" fill="#16251d"/><path d="M18.2 20.5 v-2.4 a2.8 2.8 0 0 1 5.6 0 v2.4" fill="none" stroke="#56c59a" stroke-width="1.7"/><rect x="16" y="20.5" width="9" height="5.3" fill="#56c59a"/></svg>
<div class="tn" style="left:1642.5px;top:351px">cleanEclipseClasspath</div>
<svg class="ic" width="28" height="28" viewBox="0 0 28 28" style="left:1611px;top:390px"><g stroke="#16251d" stroke-width="2.2"><rect x="9.30" y="1.50" width="3.60" height="10.20" transform="rotate(0 11.10 11.70)" fill="#16251d"/><rect x="9.30" y="1.50" width="3.60" height="10.20" transform="rotate(45 11.10 11.70)" fill="#16251d"/><rect x="9.30" y="1.50" width="3.60" height="10.20" transform="rotate(90 11.10 11.70)" fill="#16251d"/><rect x="9.30" y="1.50" width="3.60" height="10.20" transform="rotate(135 11.10 11.70)" fill="#16251d"/><rect x="9.30" y="1.50" width="3.60" height="10.20" transform="rotate(180 11.10 11.70)" fill="#16251d"/><rect x="9.30" y="1.50" width="3.60" height="10.20" transform="rotate(225 11.10 11.70)" fill="#16251d"/><rect x="9.30" y="1.50" width="3.60" height="10.20" transform="rotate(270 11.10 11.70)" fill="#16251d"/><rect x="9.30" y="1.50" width="3.60" height="10.20" transform="rotate(315 11.10 11.70)" fill="#16251d"/><circle cx="11.10" cy="11.70" r="8.00" fill="#16251d"/></g><rect x="9.30" y="1.50" width="3.60" height="10.20" transform="rotate(0 11.10 11.70)" fill="#56c59a"/><rect x="9.30" y="1.50" width="3.60" height="10.20" transform="rotate(45 11.10 11.70)" fill="#56c59a"/><rect x="9.30" y="1.50" width="3.60" height="10.20" transform="rotate(90 11.10 11.70)" fill="#56c59a"/><rect x="9.30" y="1.50" width="3.60" height="10.20" transform="rotate(135 11.10 11.70)" fill="#56c59a"/><rect x="9.30" y="1.50" width="3.60" height="10.20" transform="rotate(180 11.10 11.70)" fill="#56c59a"/><rect x="9.30" y="1.50" width="3.60" height="10.20" transform="rotate(225 11.10 11.70)" fill="#56c59a"/><rect x="9.30" y="1.50" width="3.60" height="10.20" transform="rotate(270 11.10 11.70)" fill="#56c59a"/><rect x="9.30" y="1.50" width="3.60" height="10.20" transform="rotate(315 11.10 11.70)" fill="#56c59a"/><circle cx="11.10" cy="11.70" r="8.00" fill="#56c59a"/><circle cx="11.10" cy="11.70" r="3.00" fill="#0e2a1e" stroke="#123a28" stroke-width="0.8"/><path d="M18 20.5 v-2.5 a3 3 0 0 1 6 0 v2.5" fill="none" stroke="#16251d" stroke-width="4"/><rect x="14.8" y="19.3" width="11.4" height="7.7" fill="#16251d"/><path d="M18.2 20.5 v-2.4 a2.8 2.8 0 0 1 5.6 0 v2.4" fill="none" stroke="#56c59a" stroke-width="1.7"/><rect x="16" y="20.5" width="9" height="5.3" fill="#56c59a"/></svg>
<div class="tn" style="left:1642.5px;top:385px">cleanEclipseJdt</div>
<svg class="ic" width="28" height="28" viewBox="0 0 28 28" style="left:1611px;top:424px"><g stroke="#16251d" stroke-width="2.2"><rect x="9.30" y="1.50" width="3.60" height="10.20" transform="rotate(0 11.10 11.70)" fill="#16251d"/><rect x="9.30" y="1.50" width="3.60" height="10.20" transform="rotate(45 11.10 11.70)" fill="#16251d"/><rect x="9.30" y="1.50" width="3.60" height="10.20" transform="rotate(90 11.10 11.70)" fill="#16251d"/><rect x="9.30" y="1.50" width="3.60" height="10.20" transform="rotate(135 11.10 11.70)" fill="#16251d"/><rect x="9.30" y="1.50" width="3.60" height="10.20" transform="rotate(180 11.10 11.70)" fill="#16251d"/><rect x="9.30" y="1.50" width="3.60" height="10.20" transform="rotate(225 11.10 11.70)" fill="#16251d"/><rect x="9.30" y="1.50" width="3.60" height="10.20" transform="rotate(270 11.10 11.70)" fill="#16251d"/><rect x="9.30" y="1.50" width="3.60" height="10.20" transform="rotate(315 11.10 11.70)" fill="#16251d"/><circle cx="11.10" cy="11.70" r="8.00" fill="#16251d"/></g><rect x="9.30" y="1.50" width="3.60" height="10.20" transform="rotate(0 11.10 11.70)" fill="#56c59a"/><rect x="9.30" y="1.50" width="3.60" height="10.20" transform="rotate(45 11.10 11.70)" fill="#56c59a"/><rect x="9.30" y="1.50" width="3.60" height="10.20" transform="rotate(90 11.10 11.70)" fill="#56c59a"/><rect x="9.30" y="1.50" width="3.60" height="10.20" transform="rotate(135 11.10 11.70)" fill="#56c59a"/><rect x="9.30" y="1.50" width="3.60" height="10.20" transform="rotate(180 11.10 11.70)" fill="#56c59a"/><rect x="9.30" y="1.50" width="3.60" height="10.20" transform="rotate(225 11.10 11.70)" fill="#56c59a"/><rect x="9.30" y="1.50" width="3.60" height="10.20" transform="rotate(270 11.10 11.70)" fill="#56c59a"/><rect x="9.30" y="1.50" width="3.60" height="10.20" transform="rotate(315 11.10 11.70)" fill="#56c59a"/><circle cx="11.10" cy="11.70" r="8.00" fill="#56c59a"/><circle cx="11.10" cy="11.70" r="3.00" fill="#0e2a1e" stroke="#123a28" stroke-width="0.8"/><path d="M18 20.5 v-2.5 a3 3 0 0 1 6 0 v2.5" fill="none" stroke="#16251d" stroke-width="4"/><rect x="14.8" y="19.3" width="11.4" height="7.7" fill="#16251d"/><path d="M18.2 20.5 v-2.4 a2.8 2.8 0 0 1 5.6 0 v2.4" fill="none" stroke="#56c59a" stroke-width="1.7"/><rect x="16" y="20.5" width="9" height="5.3" fill="#56c59a"/></svg>
<div class="tn" style="left:1642.5px;top:419px">cleanEclipseProject</div>
<svg class="ic" width="28" height="28" viewBox="0 0 28 28" style="left:1611px;top:458px"><g stroke="#16251d" stroke-width="2.2"><rect x="9.30" y="1.50" width="3.60" height="10.20" transform="rotate(0 11.10 11.70)" fill="#16251d"/><rect x="9.30" y="1.50" width="3.60" height="10.20" transform="rotate(45 11.10 11.70)" fill="#16251d"/><rect x="9.30" y="1.50" width="3.60" height="10.20" transform="rotate(90 11.10 11.70)" fill="#16251d"/><rect x="9.30" y="1.50" width="3.60" height="10.20" transform="rotate(135 11.10 11.70)" fill="#16251d"/><rect x="9.30" y="1.50" width="3.60" height="10.20" transform="rotate(180 11.10 11.70)" fill="#16251d"/><rect x="9.30" y="1.50" width="3.60" height="10.20" transform="rotate(225 11.10 11.70)" fill="#16251d"/><rect x="9.30" y="1.50" width="3.60" height="10.20" transform="rotate(270 11.10 11.70)" fill="#16251d"/><rect x="9.30" y="1.50" width="3.60" height="10.20" transform="rotate(315 11.10 11.70)" fill="#16251d"/><circle cx="11.10" cy="11.70" r="8.00" fill="#16251d"/></g><rect x="9.30" y="1.50" width="3.60" height="10.20" transform="rotate(0 11.10 11.70)" fill="#56c59a"/><rect x="9.30" y="1.50" width="3.60" height="10.20" transform="rotate(45 11.10 11.70)" fill="#56c59a"/><rect x="9.30" y="1.50" width="3.60" height="10.20" transform="rotate(90 11.10 11.70)" fill="#56c59a"/><rect x="9.30" y="1.50" width="3.60" height="10.20" transform="rotate(135 11.10 11.70)" fill="#56c59a"/><rect x="9.30" y="1.50" width="3.60" height="10.20" transform="rotate(180 11.10 11.70)" fill="#56c59a"/><rect x="9.30" y="1.50" width="3.60" height="10.20" transform="rotate(225 11.10 11.70)" fill="#56c59a"/><rect x="9.30" y="1.50" width="3.60" height="10.20" transform="rotate(270 11.10 11.70)" fill="#56c59a"/><rect x="9.30" y="1.50" width="3.60" height="10.20" transform="rotate(315 11.10 11.70)" fill="#56c59a"/><circle cx="11.10" cy="11.70" r="8.00" fill="#56c59a"/><circle cx="11.10" cy="11.70" r="3.00" fill="#0e2a1e" stroke="#123a28" stroke-width="0.8"/><path d="M18 20.5 v-2.5 a3 3 0 0 1 6 0 v2.5" fill="none" stroke="#16251d" stroke-width="4"/><rect x="14.8" y="19.3" width="11.4" height="7.7" fill="#16251d"/><path d="M18.2 20.5 v-2.4 a2.8 2.8 0 0 1 5.6 0 v2.4" fill="none" stroke="#56c59a" stroke-width="1.7"/><rect x="16" y="20.5" width="9" height="5.3" fill="#56c59a"/></svg>
<div class="tn" style="left:1642.5px;top:453px">cleanTest</div>
<svg class="ic" width="28" height="28" viewBox="0 0 28 28" style="left:1611px;top:492px"><g stroke="#16251d" stroke-width="2.2"><rect x="9.30" y="1.50" width="3.60" height="10.20" transform="rotate(0 11.10 11.70)" fill="#16251d"/><rect x="9.30" y="1.50" width="3.60" height="10.20" transform="rotate(45 11.10 11.70)" fill="#16251d"/><rect x="9.30" y="1.50" width="3.60" height="10.20" transform="rotate(90 11.10 11.70)" fill="#16251d"/><rect x="9.30" y="1.50" width="3.60" height="10.20" transform="rotate(135 11.10 11.70)" fill="#16251d"/><rect x="9.30" y="1.50" width="3.60" height="10.20" transform="rotate(180 11.10 11.70)" fill="#16251d"/><rect x="9.30" y="1.50" width="3.60" height="10.20" transform="rotate(225 11.10 11.70)" fill="#16251d"/><rect x="9.30" y="1.50" width="3.60" height="10.20" transform="rotate(270 11.10 11.70)" fill="#16251d"/><rect x="9.30" y="1.50" width="3.60" height="10.20" transform="rotate(315 11.10 11.70)" fill="#16251d"/><circle cx="11.10" cy="11.70" r="8.00" fill="#16251d"/></g><rect x="9.30" y="1.50" width="3.60" height="10.20" transform="rotate(0 11.10 11.70)" fill="#56c59a"/><rect x="9.30" y="1.50" width="3.60" height="10.20" transform="rotate(45 11.10 11.70)" fill="#56c59a"/><rect x="9.30" y="1.50" width="3.60" height="10.20" transform="rotate(90 11.10 11.70)" fill="#56c59a"/><rect x="9.30" y="1.50" width="3.60" height="10.20" transform="rotate(135 11.10 11.70)" fill="#56c59a"/><rect x="9.30" y="1.50" width="3.60" height="10.20" transform="rotate(180 11.10 11.70)" fill="#56c59a"/><rect x="9.30" y="1.50" width="3.60" height="10.20" transform="rotate(225 11.10 11.70)" fill="#56c59a"/><rect x="9.30" y="1.50" width="3.60" height="10.20" transform="rotate(270 11.10 11.70)" fill="#56c59a"/><rect x="9.30" y="1.50" width="3.60" height="10.20" transform="rotate(315 11.10 11.70)" fill="#56c59a"/><circle cx="11.10" cy="11.70" r="8.00" fill="#56c59a"/><circle cx="11.10" cy="11.70" r="3.00" fill="#0e2a1e" stroke="#123a28" stroke-width="0.8"/><path d="M18 20.5 v-2.5 a3 3 0 0 1 6 0 v2.5" fill="none" stroke="#16251d" stroke-width="4"/><rect x="14.8" y="19.3" width="11.4" height="7.7" fill="#16251d"/><path d="M18.2 20.5 v-2.4 a2.8 2.8 0 0 1 5.6 0 v2.4" fill="none" stroke="#56c59a" stroke-width="1.7"/><rect x="16" y="20.5" width="9" height="5.3" fill="#56c59a"/></svg>
<div class="tn" style="left:1642.5px;top:487px">compileJava</div>
<div class="td" style="top:487px">Compiles main Java source.</div>
<svg class="ic" width="28" height="28" viewBox="0 0 28 28" style="left:1611px;top:526px"><g stroke="#16251d" stroke-width="2.2"><rect x="9.30" y="1.50" width="3.60" height="10.20" transform="rotate(0 11.10 11.70)" fill="#16251d"/><rect x="9.30" y="1.50" width="3.60" height="10.20" transform="rotate(45 11.10 11.70)" fill="#16251d"/><rect x="9.30" y="1.50" width="3.60" height="10.20" transform="rotate(90 11.10 11.70)" fill="#16251d"/><rect x="9.30" y="1.50" width="3.60" height="10.20" transform="rotate(135 11.10 11.70)" fill="#16251d"/><rect x="9.30" y="1.50" width="3.60" height="10.20" transform="rotate(180 11.10 11.70)" fill="#16251d"/><rect x="9.30" y="1.50" width="3.60" height="10.20" transform="rotate(225 11.10 11.70)" fill="#16251d"/><rect x="9.30" y="1.50" width="3.60" height="10.20" transform="rotate(270 11.10 11.70)" fill="#16251d"/><rect x="9.30" y="1.50" width="3.60" height="10.20" transform="rotate(315 11.10 11.70)" fill="#16251d"/><circle cx="11.10" cy="11.70" r="8.00" fill="#16251d"/></g><rect x="9.30" y="1.50" width="3.60" height="10.20" transform="rotate(0 11.10 11.70)" fill="#56c59a"/><rect x="9.30" y="1.50" width="3.60" height="10.20" transform="rotate(45 11.10 11.70)" fill="#56c59a"/><rect x="9.30" y="1.50" width="3.60" height="10.20" transform="rotate(90 11.10 11.70)" fill="#56c59a"/><rect x="9.30" y="1.50" width="3.60" height="10.20" transform="rotate(135 11.10 11.70)" fill="#56c59a"/><rect x="9.30" y="1.50" width="3.60" height="10.20" transform="rotate(180 11.10 11.70)" fill="#56c59a"/><rect x="9.30" y="1.50" width="3.60" height="10.20" transform="rotate(225 11.10 11.70)" fill="#56c59a"/><rect x="9.30" y="1.50" width="3.60" height="10.20" transform="rotate(270 11.10 11.70)" fill="#56c59a"/><rect x="9.30" y="1.50" width="3.60" height="10.20" transform="rotate(315 11.10 11.70)" fill="#56c59a"/><circle cx="11.10" cy="11.70" r="8.00" fill="#56c59a"/><circle cx="11.10" cy="11.70" r="3.00" fill="#0e2a1e" stroke="#123a28" stroke-width="0.8"/><path d="M18 20.5 v-2.5 a3 3 0 0 1 6 0 v2.5" fill="none" stroke="#16251d" stroke-width="4"/><rect x="14.8" y="19.3" width="11.4" height="7.7" fill="#16251d"/><path d="M18.2 20.5 v-2.4 a2.8 2.8 0 0 1 5.6 0 v2.4" fill="none" stroke="#56c59a" stroke-width="1.7"/><rect x="16" y="20.5" width="9" height="5.3" fill="#56c59a"/></svg>
<div class="tn" style="left:1642.5px;top:521px">compileTestJava</div>
<div class="td" style="top:521px">Compiles test Java source.</div>
<svg class="ic" width="28" height="28" viewBox="0 0 28 28" style="left:1611px;top:560px"><g stroke="#16251d" stroke-width="2.2"><rect x="9.30" y="1.50" width="3.60" height="10.20" transform="rotate(0 11.10 11.70)" fill="#16251d"/><rect x="9.30" y="1.50" width="3.60" height="10.20" transform="rotate(45 11.10 11.70)" fill="#16251d"/><rect x="9.30" y="1.50" width="3.60" height="10.20" transform="rotate(90 11.10 11.70)" fill="#16251d"/><rect x="9.30" y="1.50" width="3.60" height="10.20" transform="rotate(135 11.10 11.70)" fill="#16251d"/><rect x="9.30" y="1.50" width="3.60" height="10.20" transform="rotate(180 11.10 11.70)" fill="#16251d"/><rect x="9.30" y="1.50" width="3.60" height="10.20" transform="rotate(225 11.10 11.70)" fill="#16251d"/><rect x="9.30" y="1.50" width="3.60" height="10.20" transform="rotate(270 11.10 11.70)" fill="#16251d"/><rect x="9.30" y="1.50" width="3.60" height="10.20" transform="rotate(315 11.10 11.70)" fill="#16251d"/><circle cx="11.10" cy="11.70" r="8.00" fill="#16251d"/></g><rect x="9.30" y="1.50" width="3.60" height="10.20" transform="rotate(0 11.10 11.70)" fill="#56c59a"/><rect x="9.30" y="1.50" width="3.60" height="10.20" transform="rotate(45 11.10 11.70)" fill="#56c59a"/><rect x="9.30" y="1.50" width="3.60" height="10.20" transform="rotate(90 11.10 11.70)" fill="#56c59a"/><rect x="9.30" y="1.50" width="3.60" height="10.20" transform="rotate(135 11.10 11.70)" fill="#56c59a"/><rect x="9.30" y="1.50" width="3.60" height="10.20" transform="rotate(180 11.10 11.70)" fill="#56c59a"/><rect x="9.30" y="1.50" width="3.60" height="10.20" transform="rotate(225 11.10 11.70)" fill="#56c59a"/><rect x="9.30" y="1.50" width="3.60" height="10.20" transform="rotate(270 11.10 11.70)" fill="#56c59a"/><rect x="9.30" y="1.50" width="3.60" height="10.20" transform="rotate(315 11.10 11.70)" fill="#56c59a"/><circle cx="11.10" cy="11.70" r="8.00" fill="#56c59a"/><circle cx="11.10" cy="11.70" r="3.00" fill="#0e2a1e" stroke="#123a28" stroke-width="0.8"/><path d="M18 20.5 v-2.5 a3 3 0 0 1 6 0 v2.5" fill="none" stroke="#16251d" stroke-width="4"/><rect x="14.8" y="19.3" width="11.4" height="7.7" fill="#16251d"/><path d="M18.2 20.5 v-2.4 a2.8 2.8 0 0 1 5.6 0 v2.4" fill="none" stroke="#56c59a" stroke-width="1.7"/><rect x="16" y="20.5" width="9" height="5.3" fill="#56c59a"/></svg>
<div class="tn" style="left:1642.5px;top:555px">components</div>
<div class="td" style="top:555px">Displays the components produced by root project &#x27;selenide-browserstack-master&#x27;. [deprecated]</div>
<svg class="ic" width="28" height="28" viewBox="0 0 28 28" style="left:1611px;top:594px"><g stroke="#16251d" stroke-width="2.2"><rect x="9.30" y="1.50" width="3.60" height="10.20" transform="rotate(0 11.10 11.70)" fill="#16251d"/><rect x="9.30" y="1.50" width="3.60" height="10.20" transform="rotate(45 11.10 11.70)" fill="#16251d"/><rect x="9.30" y="1.50" width="3.60" height="10.20" transform="rotate(90 11.10 11.70)" fill="#16251d"/><rect x="9.30" y="1.50" width="3.60" height="10.20" transform="rotate(135 11.10 11.70)" fill="#16251d"/><rect x="9.30" y="1.50" width="3.60" height="10.20" transform="rotate(180 11.10 11.70)" fill="#16251d"/><rect x="9.30" y="1.50" width="3.60" height="10.20" transform="rotate(225 11.10 11.70)" fill="#16251d"/><rect x="9.30" y="1.50" width="3.60" height="10.20" transform="rotate(270 11.10 11.70)" fill="#16251d"/><rect x="9.30" y="1.50" width="3.60" height="10.20" transform="rotate(315 11.10 11.70)" fill="#16251d"/><circle cx="11.10" cy="11.70" r="8.00" fill="#16251d"/></g><rect x="9.30" y="1.50" width="3.60" height="10.20" transform="rotate(0 11.10 11.70)" fill="#56c59a"/><rect x="9.30" y="1.50" width="3.60" height="10.20" transform="rotate(45 11.10 11.70)" fill="#56c59a"/><rect x="9.30" y="1.50" width="3.60" height="10.20" transform="rotate(90 11.10 11.70)" fill="#56c59a"/><rect x="9.30" y="1.50" width="3.60" height="10.20" transform="rotate(135 11.10 11.70)" fill="#56c59a"/><rect x="9.30" y="1.50" width="3.60" height="10.20" transform="rotate(180 11.10 11.70)" fill="#56c59a"/><rect x="9.30" y="1.50" width="3.60" height="10.20" transform="rotate(225 11.10 11.70)" fill="#56c59a"/><rect x="9.30" y="1.50" width="3.60" height="10.20" transform="rotate(270 11.10 11.70)" fill="#56c59a"/><rect x="9.30" y="1.50" width="3.60" height="10.20" transform="rotate(315 11.10 11.70)" fill="#56c59a"/><circle cx="11.10" cy="11.70" r="8.00" fill="#56c59a"/><circle cx="11.10" cy="11.70" r="3.00" fill="#0e2a1e" stroke="#123a28" stroke-width="0.8"/><path d="M18 20.5 v-2.5 a3 3 0 0 1 6 0 v2.5" fill="none" stroke="#16251d" stroke-width="4"/><rect x="14.8" y="19.3" width="11.4" height="7.7" fill="#16251d"/><path d="M18.2 20.5 v-2.4 a2.8 2.8 0 0 1 5.6 0 v2.4" fill="none" stroke="#56c59a" stroke-width="1.7"/><rect x="16" y="20.5" width="9" height="5.3" fill="#56c59a"/></svg>
<div class="tn" style="left:1642.5px;top:589px">dependentComponents</div>
<div class="td" style="top:589px">Displays the dependent components of components in root project &#x27;selenide-browserstack-master&#x27;. [deprecated]</div>
<svg class="ic" width="28" height="28" viewBox="0 0 28 28" style="left:1611px;top:628px"><g stroke="#16251d" stroke-width="2.2"><rect x="9.30" y="1.50" width="3.60" height="10.20" transform="rotate(0 11.10 11.70)" fill="#16251d"/><rect x="9.30" y="1.50" width="3.60" height="10.20" transform="rotate(45 11.10 11.70)" fill="#16251d"/><rect x="9.30" y="1.50" width="3.60" height="10.20" transform="rotate(90 11.10 11.70)" fill="#16251d"/><rect x="9.30" y="1.50" width="3.60" height="10.20" transform="rotate(135 11.10 11.70)" fill="#16251d"/><rect x="9.30" y="1.50" width="3.60" height="10.20" transform="rotate(180 11.10 11.70)" fill="#16251d"/><rect x="9.30" y="1.50" width="3.60" height="10.20" transform="rotate(225 11.10 11.70)" fill="#16251d"/><rect x="9.30" y="1.50" width="3.60" height="10.20" transform="rotate(270 11.10 11.70)" fill="#16251d"/><rect x="9.30" y="1.50" width="3.60" height="10.20" transform="rotate(315 11.10 11.70)" fill="#16251d"/><circle cx="11.10" cy="11.70" r="8.00" fill="#16251d"/></g><rect x="9.30" y="1.50" width="3.60" height="10.20" transform="rotate(0 11.10 11.70)" fill="#56c59a"/><rect x="9.30" y="1.50" width="3.60" height="10.20" transform="rotate(45 11.10 11.70)" fill="#56c59a"/><rect x="9.30" y="1.50" width="3.60" height="10.20" transform="rotate(90 11.10 11.70)" fill="#56c59a"/><rect x="9.30" y="1.50" width="3.60" height="10.20" transform="rotate(135 11.10 11.70)" fill="#56c59a"/><rect x="9.30" y="1.50" width="3.60" height="10.20" transform="rotate(180 11.10 11.70)" fill="#56c59a"/><rect x="9.30" y="1.50" width="3.60" height="10.20" transform="rotate(225 11.10 11.70)" fill="#56c59a"/><rect x="9.30" y="1.50" width="3.60" height="10.20" transform="rotate(270 11.10 11.70)" fill="#56c59a"/><rect x="9.30" y="1.50" width="3.60" height="10.20" transform="rotate(315 11.10 11.70)" fill="#56c59a"/><circle cx="11.10" cy="11.70" r="8.00" fill="#56c59a"/><circle cx="11.10" cy="11.70" r="3.00" fill="#0e2a1e" stroke="#123a28" stroke-width="0.8"/><path d="M18 20.5 v-2.5 a3 3 0 0 1 6 0 v2.5" fill="none" stroke="#16251d" stroke-width="4"/><rect x="14.8" y="19.3" width="11.4" height="7.7" fill="#16251d"/><path d="M18.2 20.5 v-2.4 a2.8 2.8 0 0 1 5.6 0 v2.4" fill="none" stroke="#56c59a" stroke-width="1.7"/><rect x="16" y="20.5" width="9" height="5.3" fill="#56c59a"/></svg>
<div class="tn" style="left:1642.5px;top:623px">eclipseClasspath</div>
<div class="td" style="top:623px">Generates the Eclipse classpath file.</div>
<svg class="ic" width="28" height="28" viewBox="0 0 28 28" style="left:1611px;top:662px"><g stroke="#16251d" stroke-width="2.2"><rect x="9.30" y="1.50" width="3.60" height="10.20" transform="rotate(0 11.10 11.70)" fill="#16251d"/><rect x="9.30" y="1.50" width="3.60" height="10.20" transform="rotate(45 11.10 11.70)" fill="#16251d"/><rect x="9.30" y="1.50" width="3.60" height="10.20" transform="rotate(90 11.10 11.70)" fill="#16251d"/><rect x="9.30" y="1.50" width="3.60" height="10.20" transform="rotate(135 11.10 11.70)" fill="#16251d"/><rect x="9.30" y="1.50" width="3.60" height="10.20" transform="rotate(180 11.10 11.70)" fill="#16251d"/><rect x="9.30" y="1.50" width="3.60" height="10.20" transform="rotate(225 11.10 11.70)" fill="#16251d"/><rect x="9.30" y="1.50" width="3.60" height="10.20" transform="rotate(270 11.10 11.70)" fill="#16251d"/><rect x="9.30" y="1.50" width="3.60" height="10.20" transform="rotate(315 11.10 11.70)" fill="#16251d"/><circle cx="11.10" cy="11.70" r="8.00" fill="#16251d"/></g><rect x="9.30" y="1.50" width="3.60" height="10.20" transform="rotate(0 11.10 11.70)" fill="#56c59a"/><rect x="9.30" y="1.50" width="3.60" height="10.20" transform="rotate(45 11.10 11.70)" fill="#56c59a"/><rect x="9.30" y="1.50" width="3.60" height="10.20" transform="rotate(90 11.10 11.70)" fill="#56c59a"/><rect x="9.30" y="1.50" width="3.60" height="10.20" transform="rotate(135 11.10 11.70)" fill="#56c59a"/><rect x="9.30" y="1.50" width="3.60" height="10.20" transform="rotate(180 11.10 11.70)" fill="#56c59a"/><rect x="9.30" y="1.50" width="3.60" height="10.20" transform="rotate(225 11.10 11.70)" fill="#56c59a"/><rect x="9.30" y="1.50" width="3.60" height="10.20" transform="rotate(270 11.10 11.70)" fill="#56c59a"/><rect x="9.30" y="1.50" width="3.60" height="10.20" transform="rotate(315 11.10 11.70)" fill="#56c59a"/><circle cx="11.10" cy="11.70" r="8.00" fill="#56c59a"/><circle cx="11.10" cy="11.70" r="3.00" fill="#0e2a1e" stroke="#123a28" stroke-width="0.8"/><path d="M18 20.5 v-2.5 a3 3 0 0 1 6 0 v2.5" fill="none" stroke="#16251d" stroke-width="4"/><rect x="14.8" y="19.3" width="11.4" height="7.7" fill="#16251d"/><path d="M18.2 20.5 v-2.4 a2.8 2.8 0 0 1 5.6 0 v2.4" fill="none" stroke="#56c59a" stroke-width="1.7"/><rect x="16" y="20.5" width="9" height="5.3" fill="#56c59a"/></svg>
<div class="tn" style="left:1642.5px;top:657px">eclipseJdt</div>
<div class="td" style="top:657px">Generates the Eclipse JDT settings file.</div>
<svg class="ic" width="28" height="28" viewBox="0 0 28 28" style="left:1611px;top:696px"><g stroke="#16251d" stroke-width="2.2"><rect x="9.30" y="1.50" width="3.60" height="10.20" transform="rotate(0 11.10 11.70)" fill="#16251d"/><rect x="9.30" y="1.50" width="3.60" height="10.20" transform="rotate(45 11.10 11.70)" fill="#16251d"/><rect x="9.30" y="1.50" width="3.60" height="10.20" transform="rotate(90 11.10 11.70)" fill="#16251d"/><rect x="9.30" y="1.50" width="3.60" height="10.20" transform="rotate(135 11.10 11.70)" fill="#16251d"/><rect x="9.30" y="1.50" width="3.60" height="10.20" transform="rotate(180 11.10 11.70)" fill="#16251d"/><rect x="9.30" y="1.50" width="3.60" height="10.20" transform="rotate(225 11.10 11.70)" fill="#16251d"/><rect x="9.30" y="1.50" width="3.60" height="10.20" transform="rotate(270 11.10 11.70)" fill="#16251d"/><rect x="9.30" y="1.50" width="3.60" height="10.20" transform="rotate(315 11.10 11.70)" fill="#16251d"/><circle cx="11.10" cy="11.70" r="8.00" fill="#16251d"/></g><rect x="9.30" y="1.50" width="3.60" height="10.20" transform="rotate(0 11.10 11.70)" fill="#56c59a"/><rect x="9.30" y="1.50" width="3.60" height="10.20" transform="rotate(45 11.10 11.70)" fill="#56c59a"/><rect x="9.30" y="1.50" width="3.60" height="10.20" transform="rotate(90 11.10 11.70)" fill="#56c59a"/><rect x="9.30" y="1.50" width="3.60" height="10.20" transform="rotate(135 11.10 11.70)" fill="#56c59a"/><rect x="9.30" y="1.50" width="3.60" height="10.20" transform="rotate(180 11.10 11.70)" fill="#56c59a"/><rect x="9.30" y="1.50" width="3.60" height="10.20" transform="rotate(225 11.10 11.70)" fill="#56c59a"/><rect x="9.30" y="1.50" width="3.60" height="10.20" transform="rotate(270 11.10 11.70)" fill="#56c59a"/><rect x="9.30" y="1.50" width="3.60" height="10.20" transform="rotate(315 11.10 11.70)" fill="#56c59a"/><circle cx="11.10" cy="11.70" r="8.00" fill="#56c59a"/><circle cx="11.10" cy="11.70" r="3.00" fill="#0e2a1e" stroke="#123a28" stroke-width="0.8"/><path d="M18 20.5 v-2.5 a3 3 0 0 1 6 0 v2.5" fill="none" stroke="#16251d" stroke-width="4"/><rect x="14.8" y="19.3" width="11.4" height="7.7" fill="#16251d"/><path d="M18.2 20.5 v-2.4 a2.8 2.8 0 0 1 5.6 0 v2.4" fill="none" stroke="#56c59a" stroke-width="1.7"/><rect x="16" y="20.5" width="9" height="5.3" fill="#56c59a"/></svg>
<div class="tn" style="left:1642.5px;top:691px">eclipseProject</div>
<div class="td" style="top:691px">Generates the Eclipse project file.</div>
<svg class="ic" width="28" height="28" viewBox="0 0 28 28" style="left:1611px;top:730px"><g stroke="#16251d" stroke-width="2.2"><rect x="9.30" y="1.50" width="3.60" height="10.20" transform="rotate(0 11.10 11.70)" fill="#16251d"/><rect x="9.30" y="1.50" width="3.60" height="10.20" transform="rotate(45 11.10 11.70)" fill="#16251d"/><rect x="9.30" y="1.50" width="3.60" height="10.20" transform="rotate(90 11.10 11.70)" fill="#16251d"/><rect x="9.30" y="1.50" width="3.60" height="10.20" transform="rotate(135 11.10 11.70)" fill="#16251d"/><rect x="9.30" y="1.50" width="3.60" height="10.20" transform="rotate(180 11.10 11.70)" fill="#16251d"/><rect x="9.30" y="1.50" width="3.60" height="10.20" transform="rotate(225 11.10 11.70)" fill="#16251d"/><rect x="9.30" y="1.50" width="3.60" height="10.20" transform="rotate(270 11.10 11.70)" fill="#16251d"/><rect x="9.30" y="1.50" width="3.60" height="10.20" transform="rotate(315 11.10 11.70)" fill="#16251d"/><circle cx="11.10" cy="11.70" r="8.00" fill="#16251d"/></g><rect x="9.30" y="1.50" width="3.60" height="10.20" transform="rotate(0 11.10 11.70)" fill="#56c59a"/><rect x="9.30" y="1.50" width="3.60" height="10.20" transform="rotate(45 11.10 11.70)" fill="#56c59a"/><rect x="9.30" y="1.50" width="3.60" height="10.20" transform="rotate(90 11.10 11.70)" fill="#56c59a"/><rect x="9.30" y="1.50" width="3.60" height="10.20" transform="rotate(135 11.10 11.70)" fill="#56c59a"/><rect x="9.30" y="1.50" width="3.60" height="10.20" transform="rotate(180 11.10 11.70)" fill="#56c59a"/><rect x="9.30" y="1.50" width="3.60" height="10.20" transform="rotate(225 11.10 11.70)" fill="#56c59a"/><rect x="9.30" y="1.50" width="3.60" height="10.20" transform="rotate(270 11.10 11.70)" fill="#56c59a"/><rect x="9.30" y="1.50" width="3.60" height="10.20" transform="rotate(315 11.10 11.70)" fill="#56c59a"/><circle cx="11.10" cy="11.70" r="8.00" fill="#56c59a"/><circle cx="11.10" cy="11.70" r="3.00" fill="#0e2a1e" stroke="#123a28" stroke-width="0.8"/><path d="M18 20.5 v-2.5 a3 3 0 0 1 6 0 v2.5" fill="none" stroke="#16251d" stroke-width="4"/><rect x="14.8" y="19.3" width="11.4" height="7.7" fill="#16251d"/><path d="M18.2 20.5 v-2.4 a2.8 2.8 0 0 1 5.6 0 v2.4" fill="none" stroke="#56c59a" stroke-width="1.7"/><rect x="16" y="20.5" width="9" height="5.3" fill="#56c59a"/></svg>
<div class="tn" style="left:1642.5px;top:725px">model</div>
<div class="td" style="top:725px">Displays the configuration model of root project &#x27;selenide-browserstack-master&#x27;. [deprecated]</div>
<svg class="ic" width="28" height="28" viewBox="0 0 28 28" style="left:1611px;top:764px"><g stroke="#16251d" stroke-width="2.2"><rect x="9.30" y="1.50" width="3.60" height="10.20" transform="rotate(0 11.10 11.70)" fill="#16251d"/><rect x="9.30" y="1.50" width="3.60" height="10.20" transform="rotate(45 11.10 11.70)" fill="#16251d"/><rect x="9.30" y="1.50" width="3.60" height="10.20" transform="rotate(90 11.10 11.70)" fill="#16251d"/><rect x="9.30" y="1.50" width="3.60" height="10.20" transform="rotate(135 11.10 11.70)" fill="#16251d"/><rect x="9.30" y="1.50" width="3.60" height="10.20" transform="rotate(180 11.10 11.70)" fill="#16251d"/><rect x="9.30" y="1.50" width="3.60" height="10.20" transform="rotate(225 11.10 11.70)" fill="#16251d"/><rect x="9.30" y="1.50" width="3.60" height="10.20" transform="rotate(270 11.10 11.70)" fill="#16251d"/><rect x="9.30" y="1.50" width="3.60" height="10.20" transform="rotate(315 11.10 11.70)" fill="#16251d"/><circle cx="11.10" cy="11.70" r="8.00" fill="#16251d"/></g><rect x="9.30" y="1.50" width="3.60" height="10.20" transform="rotate(0 11.10 11.70)" fill="#56c59a"/><rect x="9.30" y="1.50" width="3.60" height="10.20" transform="rotate(45 11.10 11.70)" fill="#56c59a"/><rect x="9.30" y="1.50" width="3.60" height="10.20" transform="rotate(90 11.10 11.70)" fill="#56c59a"/><rect x="9.30" y="1.50" width="3.60" height="10.20" transform="rotate(135 11.10 11.70)" fill="#56c59a"/><rect x="9.30" y="1.50" width="3.60" height="10.20" transform="rotate(180 11.10 11.70)" fill="#56c59a"/><rect x="9.30" y="1.50" width="3.60" height="10.20" transform="rotate(225 11.10 11.70)" fill="#56c59a"/><rect x="9.30" y="1.50" width="3.60" height="10.20" transform="rotate(270 11.10 11.70)" fill="#56c59a"/><rect x="9.30" y="1.50" width="3.60" height="10.20" transform="rotate(315 11.10 11.70)" fill="#56c59a"/><circle cx="11.10" cy="11.70" r="8.00" fill="#56c59a"/><circle cx="11.10" cy="11.70" r="3.00" fill="#0e2a1e" stroke="#123a28" stroke-width="0.8"/><path d="M18 20.5 v-2.5 a3 3 0 0 1 6 0 v2.5" fill="none" stroke="#16251d" stroke-width="4"/><rect x="14.8" y="19.3" width="11.4" height="7.7" fill="#16251d"/><path d="M18.2 20.5 v-2.4 a2.8 2.8 0 0 1 5.6 0 v2.4" fill="none" stroke="#56c59a" stroke-width="1.7"/><rect x="16" y="20.5" width="9" height="5.3" fill="#56c59a"/></svg>
<div class="tn" style="left:1642.5px;top:759px">nothing</div>
<svg class="ic" width="28" height="28" viewBox="0 0 28 28" style="left:1611px;top:798px"><g stroke="#16251d" stroke-width="2.2"><rect x="9.30" y="1.50" width="3.60" height="10.20" transform="rotate(0 11.10 11.70)" fill="#16251d"/><rect x="9.30" y="1.50" width="3.60" height="10.20" transform="rotate(45 11.10 11.70)" fill="#16251d"/><rect x="9.30" y="1.50" width="3.60" height="10.20" transform="rotate(90 11.10 11.70)" fill="#16251d"/><rect x="9.30" y="1.50" width="3.60" height="10.20" transform="rotate(135 11.10 11.70)" fill="#16251d"/><rect x="9.30" y="1.50" width="3.60" height="10.20" transform="rotate(180 11.10 11.70)" fill="#16251d"/><rect x="9.30" y="1.50" width="3.60" height="10.20" transform="rotate(225 11.10 11.70)" fill="#16251d"/><rect x="9.30" y="1.50" width="3.60" height="10.20" transform="rotate(270 11.10 11.70)" fill="#16251d"/><rect x="9.30" y="1.50" width="3.60" height="10.20" transform="rotate(315 11.10 11.70)" fill="#16251d"/><circle cx="11.10" cy="11.70" r="8.00" fill="#16251d"/></g><rect x="9.30" y="1.50" width="3.60" height="10.20" transform="rotate(0 11.10 11.70)" fill="#56c59a"/><rect x="9.30" y="1.50" width="3.60" height="10.20" transform="rotate(45 11.10 11.70)" fill="#56c59a"/><rect x="9.30" y="1.50" width="3.60" height="10.20" transform="rotate(90 11.10 11.70)" fill="#56c59a"/><rect x="9.30" y="1.50" width="3.60" height="10.20" transform="rotate(135 11.10 11.70)" fill="#56c59a"/><rect x="9.30" y="1.50" width="3.60" height="10.20" transform="rotate(180 11.10 11.70)" fill="#56c59a"/><rect x="9.30" y="1.50" width="3.60" height="10.20" transform="rotate(225 11.10 11.70)" fill="#56c59a"/><rect x="9.30" y="1.50" width="3.60" height="10.20" transform="rotate(270 11.10 11.70)" fill="#56c59a"/><rect x="9.30" y="1.50" width="3.60" height="10.20" transform="rotate(315 11.10 11.70)" fill="#56c59a"/><circle cx="11.10" cy="11.70" r="8.00" fill="#56c59a"/><circle cx="11.10" cy="11.70" r="3.00" fill="#0e2a1e" stroke="#123a28" stroke-width="0.8"/><path d="M18 20.5 v-2.5 a3 3 0 0 1 6 0 v2.5" fill="none" stroke="#16251d" stroke-width="4"/><rect x="14.8" y="19.3" width="11.4" height="7.7" fill="#16251d"/><path d="M18.2 20.5 v-2.4 a2.8 2.8 0 0 1 5.6 0 v2.4" fill="none" stroke="#56c59a" stroke-width="1.7"/><rect x="16" y="20.5" width="9" height="5.3" fill="#56c59a"/></svg>
<div class="tn" style="left:1642.5px;top:793px">prepareKotlinBuildScript</div>
<svg class="ic" width="28" height="28" viewBox="0 0 28 28" style="left:1611px;top:832px"><g stroke="#16251d" stroke-width="2.2"><rect x="9.30" y="1.50" width="3.60" height="10.20" transform="rotate(0 11.10 11.70)" fill="#16251d"/><rect x="9.30" y="1.50" width="3.60" height="10.20" transform="rotate(45 11.10 11.70)" fill="#16251d"/><rect x="9.30" y="1.50" width="3.60" height="10.20" transform="rotate(90 11.10 11.70)" fill="#16251d"/><rect x="9.30" y="1.50" width="3.60" height="10.20" transform="rotate(135 11.10 11.70)" fill="#16251d"/><rect x="9.30" y="1.50" width="3.60" height="10.20" transform="rotate(180 11.10 11.70)" fill="#16251d"/><rect x="9.30" y="1.50" width="3.60" height="10.20" transform="rotate(225 11.10 11.70)" fill="#16251d"/><rect x="9.30" y="1.50" width="3.60" height="10.20" transform="rotate(270 11.10 11.70)" fill="#16251d"/><rect x="9.30" y="1.50" width="3.60" height="10.20" transform="rotate(315 11.10 11.70)" fill="#16251d"/><circle cx="11.10" cy="11.70" r="8.00" fill="#16251d"/></g><rect x="9.30" y="1.50" width="3.60" height="10.20" transform="rotate(0 11.10 11.70)" fill="#56c59a"/><rect x="9.30" y="1.50" width="3.60" height="10.20" transform="rotate(45 11.10 11.70)" fill="#56c59a"/><rect x="9.30" y="1.50" width="3.60" height="10.20" transform="rotate(90 11.10 11.70)" fill="#56c59a"/><rect x="9.30" y="1.50" width="3.60" height="10.20" transform="rotate(135 11.10 11.70)" fill="#56c59a"/><rect x="9.30" y="1.50" width="3.60" height="10.20" transform="rotate(180 11.10 11.70)" fill="#56c59a"/><rect x="9.30" y="1.50" width="3.60" height="10.20" transform="rotate(225 11.10 11.70)" fill="#56c59a"/><rect x="9.30" y="1.50" width="3.60" height="10.20" transform="rotate(270 11.10 11.70)" fill="#56c59a"/><rect x="9.30" y="1.50" width="3.60" height="10.20" transform="rotate(315 11.10 11.70)" fill="#56c59a"/><circle cx="11.10" cy="11.70" r="8.00" fill="#56c59a"/><circle cx="11.10" cy="11.70" r="3.00" fill="#0e2a1e" stroke="#123a28" stroke-width="0.8"/><path d="M18 20.5 v-2.5 a3 3 0 0 1 6 0 v2.5" fill="none" stroke="#16251d" stroke-width="4"/><rect x="14.8" y="19.3" width="11.4" height="7.7" fill="#16251d"/><path d="M18.2 20.5 v-2.4 a2.8 2.8 0 0 1 5.6 0 v2.4" fill="none" stroke="#56c59a" stroke-width="1.7"/><rect x="16" y="20.5" width="9" height="5.3" fill="#56c59a"/></svg>
<div class="tn" style="left:1642.5px;top:827px">processResources</div>
<div class="td" style="top:827px">Processes main resources.</div>
<svg class="ic" width="28" height="28" viewBox="0 0 28 28" style="left:1611px;top:866px"><g stroke="#16251d" stroke-width="2.2"><rect x="9.30" y="1.50" width="3.60" height="10.20" transform="rotate(0 11.10 11.70)" fill="#16251d"/><rect x="9.30" y="1.50" width="3.60" height="10.20" transform="rotate(45 11.10 11.70)" fill="#16251d"/><rect x="9.30" y="1.50" width="3.60" height="10.20" transform="rotate(90 11.10 11.70)" fill="#16251d"/><rect x="9.30" y="1.50" width="3.60" height="10.20" transform="rotate(135 11.10 11.70)" fill="#16251d"/><rect x="9.30" y="1.50" width="3.60" height="10.20" transform="rotate(180 11.10 11.70)" fill="#16251d"/><rect x="9.30" y="1.50" width="3.60" height="10.20" transform="rotate(225 11.10 11.70)" fill="#16251d"/><rect x="9.30" y="1.50" width="3.60" height="10.20" transform="rotate(270 11.10 11.70)" fill="#16251d"/><rect x="9.30" y="1.50" width="3.60" height="10.20" transform="rotate(315 11.10 11.70)" fill="#16251d"/><circle cx="11.10" cy="11.70" r="8.00" fill="#16251d"/></g><rect x="9.30" y="1.50" width="3.60" height="10.20" transform="rotate(0 11.10 11.70)" fill="#56c59a"/><rect x="9.30" y="1.50" width="3.60" height="10.20" transform="rotate(45 11.10 11.70)" fill="#56c59a"/><rect x="9.30" y="1.50" width="3.60" height="10.20" transform="rotate(90 11.10 11.70)" fill="#56c59a"/><rect x="9.30" y="1.50" width="3.60" height="10.20" transform="rotate(135 11.10 11.70)" fill="#56c59a"/><rect x="9.30" y="1.50" width="3.60" height="10.20" transform="rotate(180 11.10 11.70)" fill="#56c59a"/><rect x="9.30" y="1.50" width="3.60" height="10.20" transform="rotate(225 11.10 11.70)" fill="#56c59a"/><rect x="9.30" y="1.50" width="3.60" height="10.20" transform="rotate(270 11.10 11.70)" fill="#56c59a"/><rect x="9.30" y="1.50" width="3.60" height="10.20" transform="rotate(315 11.10 11.70)" fill="#56c59a"/><circle cx="11.10" cy="11.70" r="8.00" fill="#56c59a"/><circle cx="11.10" cy="11.70" r="3.00" fill="#0e2a1e" stroke="#123a28" stroke-width="0.8"/><path d="M18 20.5 v-2.5 a3 3 0 0 1 6 0 v2.5" fill="none" stroke="#16251d" stroke-width="4"/><rect x="14.8" y="19.3" width="11.4" height="7.7" fill="#16251d"/><path d="M18.2 20.5 v-2.4 a2.8 2.8 0 0 1 5.6 0 v2.4" fill="none" stroke="#56c59a" stroke-width="1.7"/><rect x="16" y="20.5" width="9" height="5.3" fill="#56c59a"/></svg>
<div class="tn" style="left:1642.5px;top:861px">processTestResources</div>
<div class="td" style="top:861px">Processes test resources.</div>
<svg class="ic" width="28" height="28" viewBox="0 0 28 28" style="left:1611px;top:900px"><g stroke="#16251d" stroke-width="2.2"><rect x="9.30" y="1.50" width="3.60" height="10.20" transform="rotate(0 11.10 11.70)" fill="#16251d"/><rect x="9.30" y="1.50" width="3.60" height="10.20" transform="rotate(45 11.10 11.70)" fill="#16251d"/><rect x="9.30" y="1.50" width="3.60" height="10.20" transform="rotate(90 11.10 11.70)" fill="#16251d"/><rect x="9.30" y="1.50" width="3.60" height="10.20" transform="rotate(135 11.10 11.70)" fill="#16251d"/><rect x="9.30" y="1.50" width="3.60" height="10.20" transform="rotate(180 11.10 11.70)" fill="#16251d"/><rect x="9.30" y="1.50" width="3.60" height="10.20" transform="rotate(225 11.10 11.70)" fill="#16251d"/><rect x="9.30" y="1.50" width="3.60" height="10.20" transform="rotate(270 11.10 11.70)" fill="#16251d"/><rect x="9.30" y="1.50" width="3.60" height="10.20" transform="rotate(315 11.10 11.70)" fill="#16251d"/><circle cx="11.10" cy="11.70" r="8.00" fill="#16251d"/></g><rect x="9.30" y="1.50" width="3.60" height="10.20" transform="rotate(0 11.10 11.70)" fill="#56c59a"/><rect x="9.30" y="1.50" width="3.60" height="10.20" transform="rotate(45 11.10 11.70)" fill="#56c59a"/><rect x="9.30" y="1.50" width="3.60" height="10.20" transform="rotate(90 11.10 11.70)" fill="#56c59a"/><rect x="9.30" y="1.50" width="3.60" height="10.20" transform="rotate(135 11.10 11.70)" fill="#56c59a"/><rect x="9.30" y="1.50" width="3.60" height="10.20" transform="rotate(180 11.10 11.70)" fill="#56c59a"/><rect x="9.30" y="1.50" width="3.60" height="10.20" transform="rotate(225 11.10 11.70)" fill="#56c59a"/><rect x="9.30" y="1.50" width="3.60" height="10.20" transform="rotate(270 11.10 11.70)" fill="#56c59a"/><rect x="9.30" y="1.50" width="3.60" height="10.20" transform="rotate(315 11.10 11.70)" fill="#56c59a"/><circle cx="11.10" cy="11.70" r="8.00" fill="#56c59a"/><circle cx="11.10" cy="11.70" r="3.00" fill="#0e2a1e" stroke="#123a28" stroke-width="0.8"/><path d="M18 20.5 v-2.5 a3 3 0 0 1 6 0 v2.5" fill="none" stroke="#16251d" stroke-width="4"/><rect x="14.8" y="19.3" width="11.4" height="7.7" fill="#16251d"/><path d="M18.2 20.5 v-2.4 a2.8 2.8 0 0 1 5.6 0 v2.4" fill="none" stroke="#56c59a" stroke-width="1.7"/><rect x="16" y="20.5" width="9" height="5.3" fill="#56c59a"/></svg>
<div class="tn" style="left:1642.5px;top:895px">sampleLocalTest</div>
<svg class="ic" width="28" height="28" viewBox="0 0 28 28" style="left:1611px;top:934px"><g stroke="#16251d" stroke-width="2.2"><rect x="9.30" y="1.50" width="3.60" height="10.20" transform="rotate(0 11.10 11.70)" fill="#16251d"/><rect x="9.30" y="1.50" width="3.60" height="10.20" transform="rotate(45 11.10 11.70)" fill="#16251d"/><rect x="9.30" y="1.50" width="3.60" height="10.20" transform="rotate(90 11.10 11.70)" fill="#16251d"/><rect x="9.30" y="1.50" width="3.60" height="10.20" transform="rotate(135 11.10 11.70)" fill="#16251d"/><rect x="9.30" y="1.50" width="3.60" height="10.20" transform="rotate(180 11.10 11.70)" fill="#16251d"/><rect x="9.30" y="1.50" width="3.60" height="10.20" transform="rotate(225 11.10 11.70)" fill="#16251d"/><rect x="9.30" y="1.50" width="3.60" height="10.20" transform="rotate(270 11.10 11.70)" fill="#16251d"/><rect x="9.30" y="1.50" width="3.60" height="10.20" transform="rotate(315 11.10 11.70)" fill="#16251d"/><circle cx="11.10" cy="11.70" r="8.00" fill="#16251d"/></g><rect x="9.30" y="1.50" width="3.60" height="10.20" transform="rotate(0 11.10 11.70)" fill="#56c59a"/><rect x="9.30" y="1.50" width="3.60" height="10.20" transform="rotate(45 11.10 11.70)" fill="#56c59a"/><rect x="9.30" y="1.50" width="3.60" height="10.20" transform="rotate(90 11.10 11.70)" fill="#56c59a"/><rect x="9.30" y="1.50" width="3.60" height="10.20" transform="rotate(135 11.10 11.70)" fill="#56c59a"/><rect x="9.30" y="1.50" width="3.60" height="10.20" transform="rotate(180 11.10 11.70)" fill="#56c59a"/><rect x="9.30" y="1.50" width="3.60" height="10.20" transform="rotate(225 11.10 11.70)" fill="#56c59a"/><rect x="9.30" y="1.50" width="3.60" height="10.20" transform="rotate(270 11.10 11.70)" fill="#56c59a"/><rect x="9.30" y="1.50" width="3.60" height="10.20" transform="rotate(315 11.10 11.70)" fill="#56c59a"/><circle cx="11.10" cy="11.70" r="8.00" fill="#56c59a"/><circle cx="11.10" cy="11.70" r="3.00" fill="#0e2a1e" stroke="#123a28" stroke-width="0.8"/><path d="M18 20.5 v-2.5 a3 3 0 0 1 6 0 v2.5" fill="none" stroke="#16251d" stroke-width="4"/><rect x="14.8" y="19.3" width="11.4" height="7.7" fill="#16251d"/><path d="M18.2 20.5 v-2.4 a2.8 2.8 0 0 1 5.6 0 v2.4" fill="none" stroke="#56c59a" stroke-width="1.7"/><rect x="16" y="20.5" width="9" height="5.3" fill="#56c59a"/></svg>
<div class="tn" style="left:1642.5px;top:929px">sampleTest</div>
<svg class="chev" width="12" height="18" viewBox="0 0 12 18" style="left:1543.0px;top:970.6px"><path d="M2 2 L9.5 9 L2 16" fill="none" stroke="#9a9a9a" stroke-width="2.6" stroke-linecap="round" stroke-linejoin="round"/></svg>
<svg class="ic" width="32" height="26" viewBox="0 0 32 26" style="left:1575px;top:967px"><path d="M1.8 7 H16.5 V22 H1.8Z" fill="#f4e2ae" stroke="#b08440" stroke-width="1.6"/><path d="M3.6 7.2 V3.8 H13.8 V7.2" fill="#fff6d8" stroke="#b8915a" stroke-width="1.4"/><g stroke="#1d2a22" stroke-width="2.2"><rect x="20.60" y="1.00" width="2.80" height="7.00" transform="rotate(0 22.00 8.00)" fill="#1d2a22"/><rect x="20.60" y="1.00" width="2.80" height="7.00" transform="rotate(45 22.00 8.00)" fill="#1d2a22"/><rect x="20.60" y="1.00" width="2.80" height="7.00" transform="rotate(90 22.00 8.00)" fill="#1d2a22"/><rect x="20.60" y="1.00" width="2.80" height="7.00" transform="rotate(135 22.00 8.00)" fill="#1d2a22"/><rect x="20.60" y="1.00" width="2.80" height="7.00" transform="rotate(180 22.00 8.00)" fill="#1d2a22"/><rect x="20.60" y="1.00" width="2.80" height="7.00" transform="rotate(225 22.00 8.00)" fill="#1d2a22"/><rect x="20.60" y="1.00" width="2.80" height="7.00" transform="rotate(270 22.00 8.00)" fill="#1d2a22"/><rect x="20.60" y="1.00" width="2.80" height="7.00" transform="rotate(315 22.00 8.00)" fill="#1d2a22"/><circle cx="22.00" cy="8.00" r="5.60" fill="#1d2a22"/></g><rect x="20.60" y="1.00" width="2.80" height="7.00" transform="rotate(0 22.00 8.00)" fill="#56c59a"/><rect x="20.60" y="1.00" width="2.80" height="7.00" transform="rotate(45 22.00 8.00)" fill="#56c59a"/><rect x="20.60" y="1.00" width="2.80" height="7.00" transform="rotate(90 22.00 8.00)" fill="#56c59a"/><rect x="20.60" y="1.00" width="2.80" height="7.00" transform="rotate(135 22.00 8.00)" fill="#56c59a"/><rect x="20.60" y="1.00" width="2.80" height="7.00" transform="rotate(180 22.00 8.00)" fill="#56c59a"/><rect x="20.60" y="1.00" width="2.80" height="7.00" transform="rotate(225 22.00 8.00)" fill="#56c59a"/><rect x="20.60" y="1.00" width="2.80" height="7.00" transform="rotate(270 22.00 8.00)" fill="#56c59a"/><rect x="20.60" y="1.00" width="2.80" height="7.00" transform="rotate(315 22.00 8.00)" fill="#56c59a"/><circle cx="22.00" cy="8.00" r="5.60" fill="#56c59a"/><circle cx="22.00" cy="8.00" r="1.90" fill="#0e2a1e" stroke="#123a28" stroke-width="0.8"/><path d="M1.8 24.6 L12.4 13.9 H30.6 L22.6 24.6Z" fill="#f8e4a0" stroke="#b07e32" stroke-width="1.8" stroke-linejoin="round"/></svg>
<div class="tn" style="left:1610.5px;top:963px">verification</div>
</body></html>
